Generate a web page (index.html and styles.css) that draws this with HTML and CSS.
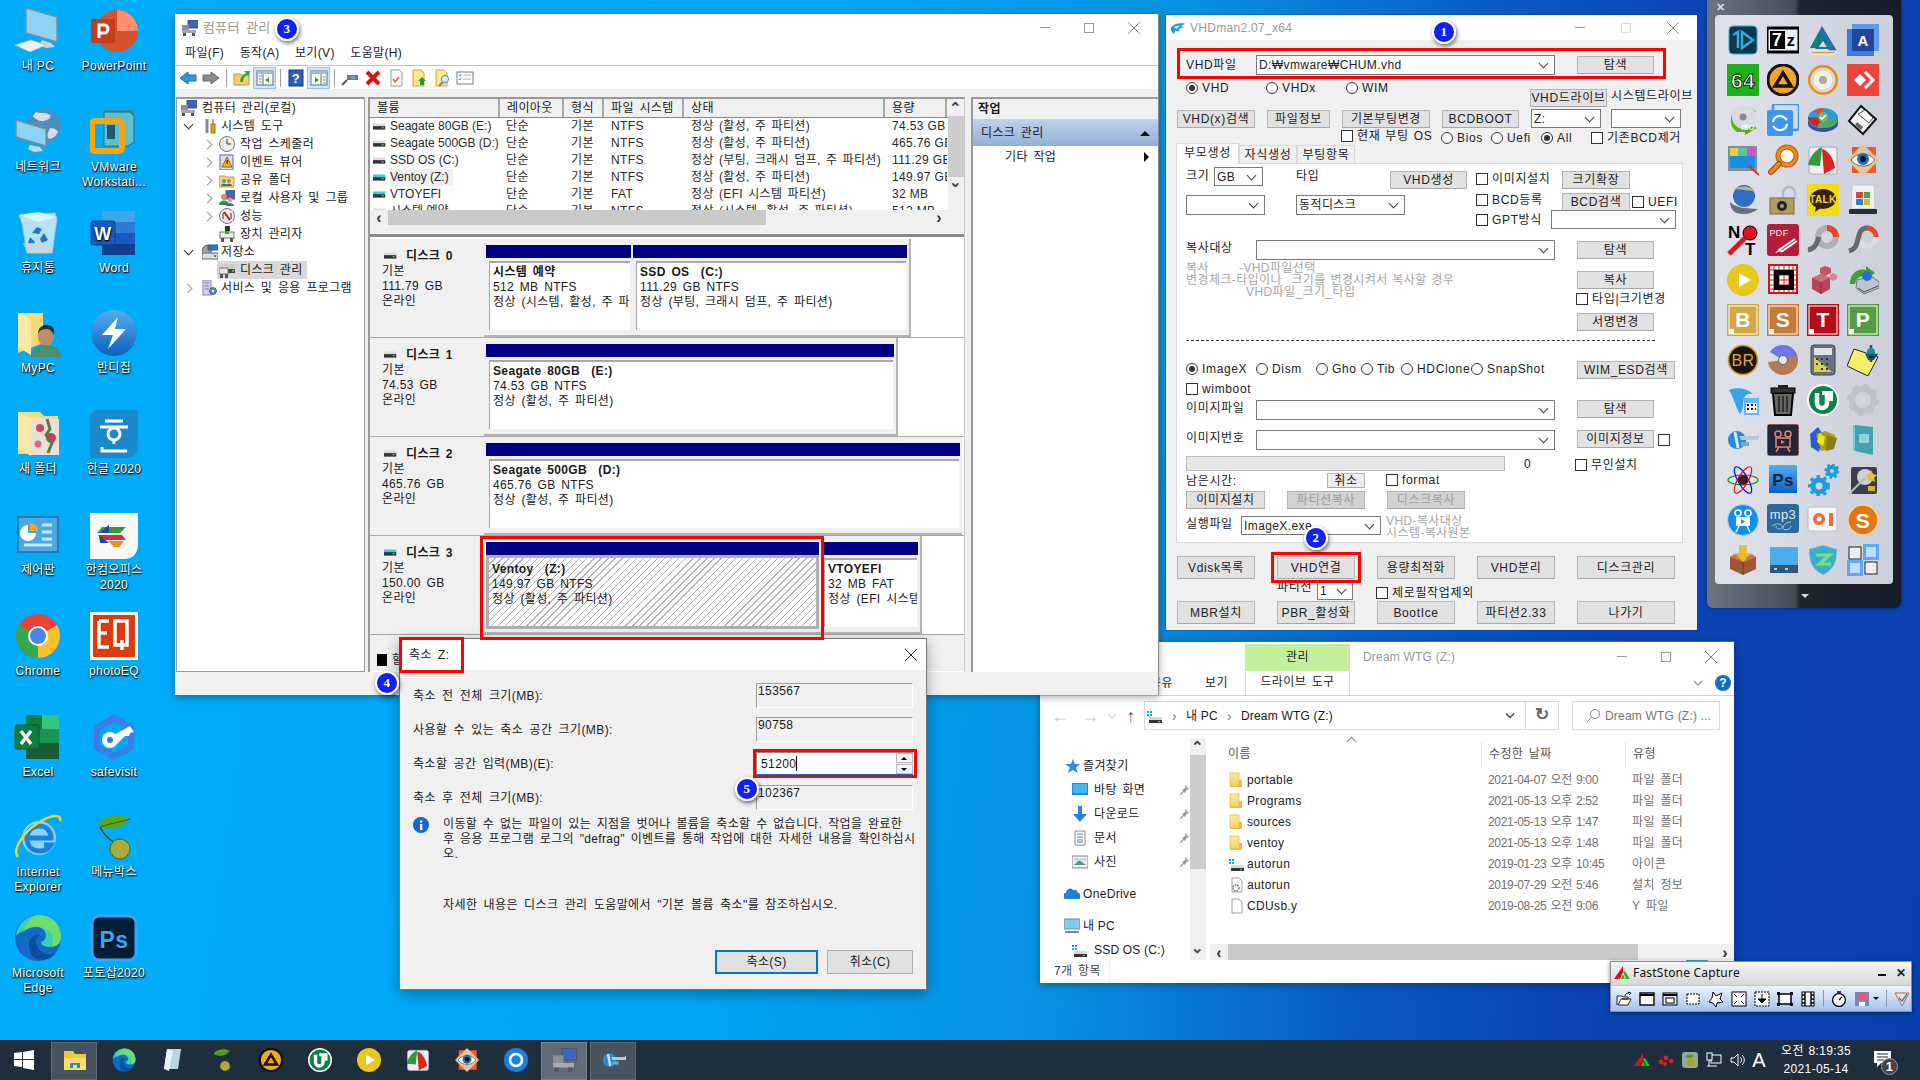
FILE: index.html
```html
<!DOCTYPE html>
<html lang="ko">
<head>
<meta charset="utf-8">
<title>VHDman</title>
<link rel="stylesheet" href="styles.css">
</head>
<body>
<svg class="sprite" xmlns="http://www.w3.org/2000/svg">
<defs>
<linearGradient id="gFolder" x1="0" y1="0" x2="0" y2="1"><stop offset="0" stop-color="#fde9a0"/><stop offset="1" stop-color="#f7cf63"/></linearGradient>
<linearGradient id="gBlue" x1="0" y1="0" x2="0" y2="1"><stop offset="0" stop-color="#55aef0"/><stop offset="1" stop-color="#0c5fc0"/></linearGradient>
<linearGradient id="gDrive" x1="0" y1="0" x2="0" y2="1"><stop offset="0" stop-color="#e6e6e6"/><stop offset="1" stop-color="#b5b5b5"/></linearGradient>

<symbol id="d-pc" viewBox="0 0 48 48"><path d="M12 1l31 9v25L12 26z" fill="#8dd3f6" stroke="#7f8d98" stroke-width="1.5"/><path d="M28 33l9 3 4 4-9 1-7-3z" fill="#cfd6da"/><path d="M1 38l16-5 15 5-16 7z" fill="#eef1f2" stroke="#b5bcc0" stroke-width=".7"/></symbol>
<symbol id="d-net" viewBox="0 0 48 48"><circle cx="30" cy="18" r="17" fill="#4b8fc0"/><path d="M22 4c6 2 10 0 14 3 2 3-3 5-6 6-4 1-9-2-11-5zM36 20c4 0 7 2 8 4-3 6-8 8-10 6-1-3 0-7 2-10z" fill="#d8dfe2"/><path d="M2 12l30 9v17L2 29z" fill="#8dd3f6" stroke="#7f8d98" stroke-width="1.5"/><path d="M16 37l10 2 3 4-9 1-6-3z" fill="#cfd6da"/></symbol>
<symbol id="d-bin" viewBox="0 0 48 48"><path d="M5 6l36-2 2 6-5 34H13L8 14z" fill="#b4e3f5" stroke="#9fc4d4"/><path d="M5 6l19-3 19 5-19 5z" fill="#dff3fb"/><path d="M18 24l5-6 5 2-3 5zM30 24l4 7-6 3-2-4zM16 28l5 5-1 2-6-1z" fill="#1d78c9"/><path d="M9 34h31l-2 10H13z" fill="#c8d4da" opacity=".7"/></symbol>
<symbol id="d-mypc" viewBox="0 0 48 48"><path d="M4 4l25 0v30L4 44V2z" fill="#f7d978"/><path d="M4 4l13 6v36L4 38z" fill="#fce9a9"/><ellipse cx="32" cy="28" rx="8" ry="9" fill="#b98d6e"/><path d="M24 25c0-7 5-9 9-9 5 0 8 3 7 10-2-5-5-6-8-6s-6 1-8 5z" fill="#2f2a26"/><path d="M17 48c0-8 7-12 15-12s15 4 16 12z" fill="#4e8d6c"/></symbol>
<symbol id="d-fold2" viewBox="0 0 48 48"><path d="M4 2h22l4 4h14v38H4z" fill="#f7d978"/><path d="M4 2l13 6v38L4 38z" fill="#fce9a9"/><path d="M17 7l28 2v36H17z" fill="#e8e2d2"/><circle cx="26" cy="18" r="4" fill="#d5476a"/><circle cx="37" cy="28" r="5" fill="#c83a60"/><circle cx="24" cy="34" r="3.5" fill="#d96a86"/><path d="M33 9l3 10-4 6 6 8-4 10" stroke="#5b7a47" stroke-width="3" fill="none"/></symbol>
<symbol id="d-hwp" viewBox="0 0 48 48"><path d="M0 10Q0 0 10 0h38v36q0 12-12 12H0z" fill="#1a8acb"/><path d="M15 11h18M10 17h28" stroke="#fff" stroke-width="3"/><circle cx="24" cy="24" r="6" fill="none" stroke="#fff" stroke-width="3"/><path d="M24 31v3M12 37v4h25" stroke="#fff" stroke-width="3" fill="none"/></symbol>
<symbol id="d-ctl" viewBox="0 0 48 48"><rect x="4" y="6" width="40" height="35" fill="#4aa8e4" stroke="#1f7cb8" stroke-width="2"/><path d="M14 14a8 8 0 1 0 8 8h-8z" fill="#fff"/><path d="M16 12a8 8 0 0 1 8 8h-8z" fill="#f0a52a"/><path d="M28 14h10M28 21h10M28 28h10M10 34h28" stroke="#c7e7f8" stroke-width="3"/></symbol>
<symbol id="d-han" viewBox="0 0 48 48"><path d="M0 2h48v30q0 16-14 16H0z" fill="#f8f8f8"/><path d="M12 16h24l-6 6H7z" fill="#2e9d3f"/><path d="M8 24h24l4 5H13z" fill="#d92b3c"/><path d="M18 30h16l-5 6H24z" fill="#ef8e21"/><path d="M9 22l10-8v8zM9 24l10 8h-9z" fill="#2844a8"/></symbol>
<symbol id="d-chrome" viewBox="0 0 48 48"><circle cx="24" cy="24" r="22" fill="#ea4335"/><path d="M24 24l19-11a22 22 0 0 1-19 33z" fill="#fbc02d"/><path d="M24 24L24 46A22 22 0 0 1 5 13z" fill="#34a853"/><circle cx="24" cy="24" r="10" fill="#fff"/><circle cx="24" cy="24" r="8" fill="#4a86e8"/></symbol>
<symbol id="d-eq" viewBox="0 0 48 48"><rect width="48" height="48" fill="#fff"/><rect x="3" y="3" width="42" height="42" fill="#dd3a0d"/><path d="M9 9h10M9 9v26h10M9 21h8M25 9h12v24H25zM32 28v10" stroke="#fff" stroke-width="3.5" fill="none"/></symbol>
<symbol id="d-xl" viewBox="0 0 48 48"><path d="M12 2h33v44H12z" fill="#107c41"/><path d="M28 2h17v14H28z" fill="#33c481"/><path d="M12 16h33v14H12z" fill="#21a366" opacity=".6"/><path d="M12 30h33v16H12z" fill="#185c37"/><rect x="1" y="12" width="24" height="24" rx="2" fill="#107c41" stroke="#0a5a2e"/><path d="M7 18l10 13M17 18L7 31" stroke="#fff" stroke-width="3.4"/></symbol>
<symbol id="d-safe" viewBox="0 0 48 48"><path d="M24 1l20 12v23L24 47 4 36V13z" fill="#3e7be6"/><path d="M24 9l14 8v15l-14 8-14-8V17z" fill="#00aaf7"/><circle cx="20" cy="27" r="8" fill="#fff"/><circle cx="20" cy="27" r="3" fill="#3e7be6"/><path d="M24 22l16-9 4 6-4 1-1 3-4 0-8 8z" fill="#fff"/></symbol>
<symbol id="d-ie" viewBox="0 0 48 48"><circle cx="25" cy="25" r="17" fill="#8cd5fa"/><path d="M13 25h24c0-8-5-12-12-12s-12 5-12 12zM13 25c0 8 5 13 13 13 6 0 9-2 11-6h-7" fill="none" stroke="#1b81de" stroke-width="5"/><path d="M4 44C-2 38 8 20 24 10 36 2 48 0 46 8" fill="none" stroke="#f5cf2c" stroke-width="2.5"/></symbol>
<symbol id="d-menu" viewBox="0 0 48 48"><path d="M8 10c8-8 22-10 32-4-6 8-18 12-30 8z" fill="#5aa51f"/><path d="M10 14c8-3 20-5 30-8" stroke="#2f6a10"/><path d="M10 14c4 8 8 12 14 15" stroke="#3a3a1a" fill="none" stroke-width="1.5"/><circle cx="30" cy="36" r="10" fill="#a8ad3a" stroke="#5a5f1c"/></symbol>
<symbol id="d-edge" viewBox="0 0 48 48"><circle cx="24" cy="24" r="23" fill="#0f6ac8"/><path d="M2 22C4 8 14 1 25 1c12 0 22 9 22 22 0 7-5 10-11 10-5 0-9-2-9-5 3-1 5-3 5-6 0-7-7-10-13-9C11 14 4 20 2 22z" fill="#3ad0b0"/><path d="M25 1c12 0 22 9 22 22 0 6-4 9-9 10 3-8 0-18-13-20-6-1-14 2-17 7C12 10 17 1 25 1z" fill="#7fe05c" opacity=".75"/><path d="M15 30c0-6 5-10 11-9-6 3-5 12 2 17 4 3 9 3 14 1-7 8-18 9-24 3-2-3-3-8-3-12z" fill="#0b4f9c"/></symbol>
<symbol id="d-ps" viewBox="0 0 48 48"><rect x="2" y="2" width="44" height="44" rx="7" fill="#001e36" stroke="#31a8ff" stroke-width="3"/><text x="24" y="34" text-anchor="middle" font-family="Liberation Sans" font-weight="700" font-size="23" fill="#31a8ff">Ps</text></symbol>
<symbol id="d-ppt" viewBox="0 0 48 48"><circle cx="27" cy="24" r="21" fill="#d35230"/><path d="M27 3a21 21 0 0 1 21 21H27z" fill="#ff8f6b"/><rect x="1" y="12" width="24" height="24" rx="2" fill="#c43e1c"/><path d="M9 31V18h5a4 4 0 0 1 0 8H9" stroke="#fff" stroke-width="3" fill="none"/></symbol>
<symbol id="d-word" viewBox="0 0 48 48"><path d="M12 2h33v44H12z" fill="#185abd"/><path d="M12 2h33v11H12z" fill="#41a5ee"/><path d="M12 13h33v11H12z" fill="#2b7cd3"/><path d="M12 35h33v11H12z" fill="#103f91"/><rect x="1" y="12" width="24" height="24" rx="2" fill="#185abd" stroke="#103f91"/><text x="13" y="31" text-anchor="middle" font-family="Liberation Sans" font-weight="700" font-size="18" fill="#fff">W</text></symbol>
<symbol id="d-vm" viewBox="0 0 48 48"><path d="M14 2h30v32H36V12H14z" fill="#2f8ca6"/><path d="M14 4h26l4 4v26l-6 4H14z" fill="#61c0cf" stroke="#1f6f86"/><rect x="2" y="13" width="30" height="30" rx="3" fill="none" stroke="#f5a612" stroke-width="6"/><rect x="17" y="17" width="8" height="14" fill="#23576a"/></symbol>
<symbol id="d-ban" viewBox="0 0 48 48"><circle cx="24" cy="24" r="23" fill="url(#gBlue)"/><path d="M28 8L12 26h11l-5 14 18-20H25z" fill="#fff"/></symbol>

<symbol id="l-1d" viewBox="0 0 32 32"><rect x="2" y="2" width="28" height="28" rx="4" fill="#0d3850" stroke="#3aa7d8"/><path d="M6 11l5-3v16" fill="none" stroke="#39a8dc" stroke-width="2.5"/><path d="M15 8l11 8-11 8z" fill="none" stroke="#39a8dc" stroke-width="2.5"/></symbol>
<symbol id="l-7z" viewBox="0 0 32 32"><rect y="4" width="32" height="24" fill="#eef1f8" stroke="#000" stroke-width="3"/><rect x="3" y="7" width="15" height="18" fill="#000"/><text x="10" y="22" text-anchor="middle" font-family="Liberation Sans" font-weight="700" font-size="18" fill="#fff">7</text><text x="24" y="22" text-anchor="middle" font-family="Liberation Sans" font-weight="700" font-size="16">z</text></symbol>
<symbol id="l-tri" viewBox="0 0 32 32"><path d="M15 2L3 24h8L16 12z" fill="#0f7e7e"/><path d="M15 2l15 25h-8L14 12z" fill="#2b6cb0"/><path d="M2 27h28l-3 3H5z" fill="#f39a2b" stroke="#fff"/><path d="M10 24h12l-6-9z" fill="none" stroke="#0f7e7e" stroke-width="2"/></symbol>
<symbol id="l-a" viewBox="0 0 32 32"><rect x="5" width="27" height="27" fill="#5f9ce8"/><rect y="5" width="27" height="27" fill="#3a7bdc"/><rect x="5" y="5" width="22" height="22" fill="#23469a"/><text x="16" y="22" text-anchor="middle" font-family="Liberation Sans" font-weight="700" font-size="15" fill="#fff">A</text></symbol>
<symbol id="l-64" viewBox="0 0 32 32"><rect width="32" height="32" fill="#1cb01c"/><text x="16" y="24" text-anchor="middle" font-family="Liberation Sans" font-weight="700" font-size="21" fill="#fff" stroke="#000" stroke-width=".8">64</text></symbol>
<symbol id="l-aimp" viewBox="0 0 32 32"><circle cx="16" cy="16" r="15" fill="#f2a623" stroke="#111" stroke-width="3"/><path d="M16 9l8 13H8z" fill="none" stroke="#111" stroke-width="3.4"/></symbol>
<symbol id="l-sun" viewBox="0 0 32 32"><circle cx="16" cy="16" r="15" fill="#f08a12"/><circle cx="16" cy="16" r="12" fill="#f5f0e8"/><circle cx="16" cy="16" r="11" fill="none" stroke="#d9d9d9" stroke-width="3"/><circle cx="16" cy="16" r="4" fill="#a9a9a9"/></symbol>
<symbol id="l-any" viewBox="0 0 32 32"><rect width="32" height="32" fill="#ef443b"/><path d="M7 16l6-6 6 6-6 6z" fill="#fff"/><path d="M18 8l8 8-8 8" fill="none" stroke="#fff" stroke-width="3"/></symbol>
<symbol id="l-iso" viewBox="0 0 32 32"><path d="M29 8A14 14 0 1 0 10 28h8v3l12-7-12-6v3h-5A9 9 0 1 1 26 9z" fill="#52b21a"/><circle cx="17" cy="13" r="12" fill="#d8dadf"/><circle cx="16" cy="13" r="3.5" fill="#888"/><text x="21" y="26" text-anchor="middle" font-family="Liberation Sans" font-weight="700" font-size="7" fill="#fff">ISO</text></symbol>
<symbol id="l-sync" viewBox="0 0 32 32"><rect x="6" width="26" height="26" rx="2" fill="none" stroke="#3d96ef" stroke-width="2.5"/><rect y="6" width="26" height="26" rx="2" fill="#3d96ef"/><path d="M6 18a7 7 0 0 1 12-4l2 2M20 20a7 7 0 0 1-12 4l-2-2" fill="none" stroke="#fff" stroke-width="2.2"/></symbol>
<symbol id="l-pie" viewBox="0 0 32 32"><ellipse cx="16" cy="14" rx="15" ry="10" fill="#2a9ad8"/><path d="M1 14v6c0 4 7 8 15 8s15-4 15-8v-6c0 6-7 10-15 10S1 20 1 14z" fill="#3a4fa8"/><path d="M16 14L1 13c0 5 4 8 9 10z" fill="#c62828"/><path d="M16 14l15 2c-1 5-8 8-15 8-2 0-4 0-6-1z" fill="#4eaa5a"/><path d="M16 14l-9-7c3-2 6-3 9-3z" fill="#e0483a"/><circle cx="16" cy="13" r="5" fill="#78b078"/><path d="M13 13l2 2 4-4" stroke="#fff" fill="none" stroke-width="1.5"/></symbol>
<symbol id="l-flop" viewBox="0 0 32 32"><path d="M14 2l15 13-13 15L2 17z" fill="#f2f2f2" stroke="#111" stroke-width="2"/><path d="M11 10l7-4 8 8-4 5z" fill="#fff" stroke="#555"/><path d="M10 18l6 5-2 3-6-5z" fill="#666"/></symbol>
<symbol id="l-pal" viewBox="0 0 32 32"><rect x="1" y="2" width="29" height="25" fill="#7e8fa0"/><rect x="3" y="4" width="25" height="20" fill="#1a8ede"/><path d="M3 4h25v8H3z" fill="#59c8a0"/><path d="M3 4h8v8H3z" fill="#e4d334"/><path d="M20 4h8v8h-8z" fill="#d94dc8"/><path d="M22 22l10 9" stroke="#c33" stroke-width="2"/></symbol>
<symbol id="l-mag" viewBox="0 0 32 32"><circle cx="20" cy="12" r="9" fill="#fff6e8" stroke="#b45e0c" stroke-width="5"/><circle cx="20" cy="12" r="9" fill="none" stroke="#f08a1c" stroke-width="3"/><path d="M12 20L4 28" stroke="#a3520c" stroke-width="6" stroke-linecap="round"/><path d="M12 20L4 28" stroke="#f08a1c" stroke-width="3.4" stroke-linecap="round"/></symbol>
<symbol id="l-fan" viewBox="0 0 32 32"><rect x="2" y="3" width="28" height="27" rx="3" fill="#eeeef2" stroke="#a8abb6"/><path d="M15 3c-8 4-12 10-14 18l12 1z" fill="#2e9a3c"/><path d="M15 5c6 1 12 10 13 19L17 30z" fill="#d62518"/></symbol>
<symbol id="l-eye" viewBox="0 0 32 32"><rect x="5" y="3" width="24" height="26" fill="#ef5a2c"/><path d="M16 0l16 16-16 16L0 16z" fill="#e2c6a0"/><path d="M4 16c6-8 18-8 24 0-6 8-18 8-24 0z" fill="#fff" stroke="#7c5c2a"/><circle cx="16" cy="15" r="6" fill="#1a6fc9"/><circle cx="16" cy="15" r="3" fill="#111"/></symbol>
<symbol id="l-glob" viewBox="0 0 32 32"><circle cx="17" cy="12" r="11" fill="#2f6fc2"/><path d="M8 5c6-4 16-3 20 3-5-2-12-2-20-3z" fill="#c9ad7d"/><path d="M3 18c6 6 14 6 28 7-6 5-14 6-21 4-4-1-7-6-7-11z" fill="#6d6f75"/></symbol>
<symbol id="l-lock" viewBox="0 0 32 32"><path d="M16 16V9a6 6 0 0 1 12 0v6" fill="none" stroke="#b8bcc4" stroke-width="2.5"/><rect x="3" y="14" width="24" height="16" fill="#b09c62" stroke="#7c6a3a"/><circle cx="15" cy="22" r="5" fill="#222"/><circle cx="15" cy="22" r="2" fill="#b09c62"/></symbol>
<symbol id="l-talk" viewBox="0 0 32 32"><rect width="32" height="32" fill="#f0dc1a"/><ellipse cx="16" cy="15" rx="13" ry="10" fill="#3a1f1f"/><path d="M9 22l-1 6 6-4z" fill="#3a1f1f"/><text x="16" y="19" text-anchor="middle" font-family="Liberation Sans" font-weight="700" font-size="10" fill="#f0dc1a">TALK</text></symbol>
<symbol id="l-win" viewBox="0 0 32 32"><path d="M5 1h22l1 24H4z" fill="#f0f2f4" stroke="#c4c8cc"/><path d="M9 8h7v6H9z" fill="#c84a3a"/><path d="M17 8h6v6h-6z" fill="#5da03a"/><path d="M9 15h7v6H9z" fill="#3a7ac0"/><path d="M17 15h6v6h-6z" fill="#e4b230"/><rect x="2" y="25" width="28" height="5" rx="1" fill="#1f2f44"/></symbol>
<symbol id="l-nt" viewBox="0 0 32 32"><text x="1" y="14" font-family="Liberation Sans" font-weight="700" font-size="17">N</text><text x="18" y="31" font-family="Liberation Sans" font-weight="700" font-size="17">T</text><circle cx="23" cy="9" r="7" fill="#e01224" stroke="#000"/><path d="M18 14L2 30" stroke="#e01224" stroke-width="5"/></symbol>
<symbol id="l-pdf" viewBox="0 0 32 32"><rect width="32" height="32" rx="3" fill="#b51d3a"/><text x="12" y="12" text-anchor="middle" font-family="Liberation Sans" font-weight="400" font-size="9" fill="#fff">PDF</text><path d="M12 26l16-11M14 28l16-11" stroke="#fff" stroke-width="2"/><path d="M8 29l5-5 2 3z" fill="#fff"/></symbol>
<symbol id="l-ring" viewBox="0 0 32 32"><circle cx="20" cy="13" r="9" fill="none" stroke="#aeb0b4" stroke-width="6"/><path d="M20 4a9 9 0 0 1 9 9" fill="none" stroke="#e8452a" stroke-width="6"/><path d="M12 13c-2 6-4 12-11 13" fill="none" stroke="#666a70" stroke-width="5"/></symbol>
<symbol id="l-sarc" viewBox="0 0 32 32"><circle cx="20" cy="13" r="9" fill="none" stroke="#dcdde2" stroke-width="5"/><path d="M20 4a9 9 0 0 1 9 9" fill="none" stroke="#e8452a" stroke-width="5"/><path d="M20 4c-8 0-8 8-10 15-1 4-4 7-8 8" fill="none" stroke="#666a70" stroke-width="5"/></symbol>
<symbol id="l-play" viewBox="0 0 32 32"><circle cx="16" cy="16" r="16" fill="#e6c81e"/><path d="M12 9l12 7-12 7z" fill="#fff"/></symbol>
<symbol id="l-grid" viewBox="0 0 32 32"><rect x="2" y="1" width="28" height="28" fill="#fff" stroke="#e01010" stroke-width="2"/><path d="M7 1v28M12 1v28M17 1v28M22 1v28M26 1v28M2 6h28M2 11h28M2 16h28M2 21h28M2 25h28" stroke="#e01010"/><path d="M7 6h15v5H12v10h15v5H7z" fill="#000"/><path d="M22 6h5v19h-5z" fill="#000"/></symbol>
<symbol id="l-cube" viewBox="0 0 32 32"><path d="M5 14l9-4 9 4v11l-9 5-9-5z" fill="#b64356"/><path d="M5 14l9 4 9-4-9-4z" fill="#d36b7d"/><path d="M14 18v12" stroke="#8c2a3c"/><path d="M18 2l6 2v5l-6 3-5-3V4z" fill="#c45568"/><path d="M26 9l4 2v4l-4 2-3-2v-4z" fill="#d98797"/></symbol>
<symbol id="l-driv" viewBox="0 0 32 32"><path d="M3 20c0-10 7-16 16-14V2l9 7-9 7v-4c-6-1-10 3-11 8z" fill="#3aa52e"/><path d="M10 16l14-4 8 6v6l-15 6-8-6z" fill="#bcc4cc" stroke="#777"/><circle cx="20" cy="12" r="5" fill="#2a6cd0"/><path d="M11 24l6 4 14-6" stroke="#447" fill="none"/></symbol>
<symbol id="l-b" viewBox="0 0 32 32"><rect width="32" height="32" fill="#d2a845"/><rect x="2" y="2" width="28" height="28" fill="none" stroke="#fff"/><rect x="2" y="25" width="5" height="5" fill="#fff"/><text x="16" y="23" text-anchor="middle" font-family="Liberation Sans" font-weight="700" font-size="21" fill="#fff">B</text></symbol>
<symbol id="l-s" viewBox="0 0 32 32"><rect width="32" height="32" fill="#c57a36"/><rect x="2" y="2" width="28" height="28" fill="none" stroke="#fff"/><rect x="2" y="25" width="5" height="5" fill="#fff"/><text x="16" y="23" text-anchor="middle" font-family="Liberation Sans" font-weight="700" font-size="21" fill="#fff">S</text></symbol>
<symbol id="l-t" viewBox="0 0 32 32"><rect width="32" height="32" fill="#b30d1c"/><rect x="2" y="2" width="28" height="28" fill="none" stroke="#fff"/><rect x="2" y="25" width="5" height="5" fill="#fff"/><text x="16" y="23" text-anchor="middle" font-family="Liberation Sans" font-weight="700" font-size="21" fill="#fff">T</text></symbol>
<symbol id="l-p" viewBox="0 0 32 32"><rect width="32" height="32" fill="#559c42"/><rect x="2" y="2" width="28" height="28" fill="none" stroke="#fff"/><rect x="2" y="25" width="5" height="5" fill="#fff"/><text x="16" y="23" text-anchor="middle" font-family="Liberation Sans" font-weight="700" font-size="21" fill="#fff">P</text></symbol>
<symbol id="l-br" viewBox="0 0 32 32"><circle cx="16" cy="16" r="14.5" fill="#171313" stroke="#d79a1f" stroke-width="1.6"/><text x="16" y="22" text-anchor="middle" font-family="Liberation Sans" font-size="16" fill="#e0a62a">BR</text></symbol>
<symbol id="l-cd" viewBox="0 0 32 32"><circle cx="16" cy="16" r="15" fill="#b47c56"/><path d="M16 1a15 15 0 0 1 14 10L16 16 3 8a15 15 0 0 1 13-7z" fill="#6a78ea"/><path d="M3 8l13 8L1 18a15 15 0 0 1 2-10z" fill="#dcdde8"/><circle cx="16" cy="16" r="4.5" fill="#e8e8ee" stroke="#666"/></symbol>
<symbol id="l-calc" viewBox="0 0 32 32"><rect x="4" y="1" width="24" height="30" rx="3" fill="#6c7280" stroke="#40454e"/><rect x="7" y="4" width="18" height="7" fill="#dde3ea"/><path d="M7 13l0 15h18z" fill="#d6d24a"/><path d="M9 14h2v2H9zM14 14h2v2h-2zM19 14h2v2h-2zM9 19h2v2H9zM14 19h2v2h-2zM19 19h2v2h-2zM14 24h2v2h-2zM19 24h2v2h-2z" fill="#333"/></symbol>
<symbol id="l-note" viewBox="0 0 32 32"><path d="M7 5l24 8-10 19L0 22z" fill="#f4f06c" stroke="#222"/><circle cx="24" cy="8" r="4" fill="#1a8c9a"/><path d="M24 4v-3M20 11h9l-3 4h-4zM24 15v3" stroke="#0f5f6c" stroke-width="2.5"/></symbol>
<symbol id="l-dolp" viewBox="0 0 32 32"><path d="M2 6c8-3 18-2 24 4-4-1-7 0-9 4-2 6 0 12-4 16-4-6-6-16-11-24z" fill="#3aa3e8"/><rect x="17" y="14" width="15" height="17" fill="#62b9f5"/><path d="M19 19h11v10H19z" fill="#fff"/><path d="M20 20h2v2h-2zM24 20h2v2h-2zM28 20h1v2h-1zM20 24h2v2h-2zM24 24h2v2h-2zM28 24h1v2h-1z" fill="#00f"/></symbol>
<symbol id="l-bin" viewBox="0 0 32 32"><path d="M6 9h20l-2 22H8z" fill="#666" stroke="#000" stroke-width="2"/><rect x="4" y="4" width="24" height="5" fill="#333" stroke="#000"/><rect x="11" y="1" width="10" height="4" fill="#222"/><path d="M12 12v16M16 12v16M20 12v16" stroke="#222" stroke-width="1.5"/></symbol>
<symbol id="l-ut" viewBox="0 0 32 32"><circle cx="16" cy="16" r="15" fill="#0a8348" stroke="#fff" stroke-width="2"/><path d="M10 9v10a5 5 0 0 0 10 0V9" fill="none" stroke="#fff" stroke-width="4.5"/><path d="M15 9h9v8" fill="none" stroke="#fff" stroke-width="4"/></symbol>
<symbol id="l-gear" viewBox="0 0 32 32"><circle cx="16" cy="16" r="11" fill="none" stroke="#bfc2c9" stroke-width="6"/><circle cx="16" cy="16" r="14" fill="none" stroke="#bfc2c9" stroke-width="4" stroke-dasharray="5 6"/><circle cx="16" cy="16" r="3" fill="#d7d9de"/></symbol>
<symbol id="l-torch" viewBox="0 0 32 32"><circle cx="10" cy="16" r="9" fill="#2a89d0"/><path d="M12 12h18l2-2v6H14z" fill="#b8c8d8"/><path d="M14 18h8v4h-8z" fill="#78a8d0"/><path d="M8 8l3 16" stroke="#cfe6f6" stroke-width="3"/></symbol>
<symbol id="l-vid" viewBox="0 0 32 32"><rect width="32" height="32" rx="3" fill="#1e2637" stroke="#e8806f"/><circle cx="11" cy="10" r="3" fill="none" stroke="#e8806f" stroke-width="1.5"/><circle cx="21" cy="10" r="3" fill="none" stroke="#e8806f" stroke-width="1.5"/><rect x="9" y="14" width="14" height="9" fill="none" stroke="#e8806f" stroke-width="1.5"/><path d="M14 16l4 2-4 2z" fill="#e8806f"/><path d="M12 23l-3 5M20 23l3 5" stroke="#e8806f" stroke-width="1.5"/></symbol>
<symbol id="l-cub2" viewBox="0 0 32 32"><path d="M3 10l8-7 6 9-5 16-8-5z" fill="#2a60c8"/><path d="M9 10l9-3 10 4-2 14-12 2z" fill="#a8a018"/><path d="M12 9l6 4-2 9-6-4z" fill="#f8e21c"/><path d="M20 11l10 3-3 11-8 2z" fill="#888014"/></symbol>
<symbol id="l-book" viewBox="0 0 32 32"><path d="M8 1l18 2v28L8 27z" fill="#3ea4b0"/><path d="M6 1h2v26l-2-1z" fill="#7fc8d0"/><rect x="12" y="10" width="10" height="9" fill="#8fd2da"/></symbol>
<symbol id="l-atom" viewBox="0 0 32 32"><ellipse cx="16" cy="16" rx="15" ry="5" fill="none" stroke="#0a8f0a" stroke-width="1.2"/><ellipse cx="16" cy="16" rx="15" ry="5" fill="none" stroke="#00f" stroke-width="1.2" transform="rotate(60 16 16)"/><ellipse cx="16" cy="16" rx="15" ry="5" fill="none" stroke="#e01010" stroke-width="1.2" transform="rotate(-60 16 16)"/><circle cx="16" cy="16" r="5" fill="#611"/><circle cx="14" cy="15" r="2" fill="#223"/><circle cx="18" cy="18" r="2" fill="#223"/></symbol>
<symbol id="l-ps" viewBox="0 0 32 32"><rect x="2" y="1" width="28" height="28" fill="url(#gBlue)"/><text x="16" y="22" text-anchor="middle" font-family="Liberation Sans" font-weight="700" font-size="17" fill="#0f2336">Ps</text></symbol>
<symbol id="l-gears" viewBox="0 0 32 32"><circle cx="12" cy="22" r="6" fill="none" stroke="#1f9be0" stroke-width="5"/><circle cx="12" cy="22" r="9.5" fill="none" stroke="#1f9be0" stroke-width="3" stroke-dasharray="3.5 3.5"/><circle cx="25" cy="7" r="4" fill="none" stroke="#1f9be0" stroke-width="4"/><circle cx="25" cy="7" r="6.5" fill="none" stroke="#1f9be0" stroke-width="2.4" stroke-dasharray="2.5 2.5"/></symbol>
<symbol id="l-wiz" viewBox="0 0 32 32"><rect x="4" y="3" width="26" height="27" rx="2" fill="#39404a"/><circle cx="18" cy="13" r="8" fill="#ccd0d8"/><path d="M2 30L18 14" stroke="#b8bcc0" stroke-width="2"/><path d="M24 6l2 4 4 1-3 3 1 4-4-2-4 2 1-4-3-3 4-1z" fill="#f0c02c"/><rect x="21" y="22" width="7" height="5" fill="#d0b040"/></symbol>
<symbol id="l-cam" viewBox="0 0 32 32"><circle cx="16" cy="16" r="15.5" fill="#0c90ef" stroke="#c8ccd0"/><circle cx="11" cy="9" r="3" fill="none" stroke="#fff" stroke-width="1.6"/><circle cx="21" cy="9" r="3" fill="none" stroke="#fff" stroke-width="1.6"/><rect x="9" y="13" width="14" height="9" fill="#fff"/><path d="M14 15l4 2.5-4 2.5z" fill="#0c90ef"/><path d="M12 22l-3 6M20 22l3 6" stroke="#fff" stroke-width="1.6"/></symbol>
<symbol id="l-mp3" viewBox="0 0 32 32"><rect width="32" height="29" rx="3" fill="#2c6a9e"/><text x="16" y="15" text-anchor="middle" font-family="Liberation Sans" font-size="13" fill="#dfe9f2">mp3</text><path d="M5 22c4-3 8-3 10 0s-6 5-6 0M24 18c-4 0-8 3-8 6s8 2 8-2" stroke="#a8c6dc" fill="none"/></symbol>
<symbol id="l-oi" viewBox="0 0 32 32"><rect x="1" y="3" width="29" height="24" rx="2" fill="#f5f5f5" stroke="#bcbfc6"/><circle cx="12" cy="15" r="6" fill="#f26a3a"/><circle cx="12" cy="15" r="2.5" fill="#fff"/><rect x="22" y="9" width="4" height="13" fill="#f26a3a"/></symbol>
<symbol id="l-so" viewBox="0 0 32 32"><circle cx="16" cy="16" r="15" fill="#e2780f" stroke="#f6d6a8" stroke-width="1.5"/><text x="16" y="24" text-anchor="middle" font-family="Liberation Sans" font-weight="700" font-size="21" fill="#fff">S</text></symbol>
<symbol id="l-box" viewBox="0 0 32 32"><path d="M3 13l13-5 13 5v12l-13 6-13-6z" fill="#a35636"/><path d="M3 13l13 5 13-5-4-3-9 3-9-3z" fill="#c67a50"/><path d="M16 18v13" stroke="#6e3620"/><path d="M12 1h8v8h4l-8 9-8-9h4z" fill="#e8bd2c"/></symbol>
<symbol id="l-bar" viewBox="0 0 32 32"><rect x="3" y="3" width="28" height="26" rx="1" fill="#4aacec"/><rect x="3" y="21" width="28" height="8" fill="#355678"/><rect x="7" y="24" width="3" height="2" fill="#bcd"/><rect x="18" y="24" width="3" height="2" fill="#bcd"/></symbol>
<symbol id="l-shld" viewBox="0 0 32 32"><path d="M16 1l14 4c0 12-2 20-14 26C4 25 2 17 2 5z" fill="#3ab0c8" stroke="#c0c4cc"/><path d="M9 11h14l-11 9h12" fill="none" stroke="#78e080" stroke-width="3"/></symbol>
<symbol id="l-four" viewBox="0 0 32 32"><rect x="2" y="3" width="12" height="12" fill="#eee" stroke="#222"/><rect x="16" y="0" width="16" height="16" fill="#5da8f5"/><rect x="19" y="3" width="10" height="10" fill="#c0dcfa"/><rect y="16" width="16" height="16" fill="#5da8f5"/><rect x="3" y="19" width="10" height="10" fill="#c0dcfa"/><rect x="18" y="18" width="12" height="12" fill="#eee" stroke="#222"/></symbol>

<symbol id="s-comp" viewBox="0 0 16 16"><rect x="6" y="0" width="10" height="8" fill="#3d64c0" stroke="#555"/><rect x="0" y="5" width="7" height="5" fill="#8b929c"/><rect x="0" y="10" width="14" height="3" fill="#a4a9b2"/><rect x="1" y="13" width="3" height="3" fill="#555"/><rect x="10" y="13" width="3" height="3" fill="#555"/></symbol>
<symbol id="s-tool" viewBox="0 0 16 16"><path d="M5 1v14" stroke="#888" stroke-width="3"/><path d="M11 1v5" stroke="#aaa" stroke-width="2"/><rect x="9" y="6" width="4" height="9" fill="#e0a020" stroke="#a07010"/></symbol>
<symbol id="s-clock" viewBox="0 0 16 16"><circle cx="8" cy="8" r="7.5" fill="#eee" stroke="#777"/><path d="M8 3v5h4" stroke="#333" fill="none"/></symbol>
<symbol id="s-ev" viewBox="0 0 16 16"><rect x="1" y="1" width="13" height="15" fill="#dde" stroke="#56709a"/><path d="M8 3l5 10H3z" fill="#f0b020" stroke="#a06010"/><rect x="7.4" y="6" width="1.5" height="4" fill="#c01010"/></symbol>
<symbol id="s-shr" viewBox="0 0 16 16"><path d="M0 4h6l1 1h8v10H0z" fill="#f3d77e" stroke="#b89a42"/><circle cx="5" cy="9" r="2" fill="#4a7"/><circle cx="10" cy="9" r="2" fill="#a86"/><path d="M2 14c0-3 6-3 6 0zM7 14c0-3 6-3 6 0z" fill="#369"/></symbol>
<symbol id="s-usr" viewBox="0 0 16 16"><rect x="7" y="0" width="9" height="9" fill="#3d64c0" stroke="#666"/><circle cx="5" cy="7" r="3" fill="#c89460"/><path d="M0 15c0-6 10-6 10 0z" fill="#3a8a58"/><circle cx="11" cy="10" r="2.4" fill="#d8a878"/><path d="M7 16c0-4 8-4 8 0z" fill="#4a68b8"/></symbol>
<symbol id="s-perf" viewBox="0 0 16 16"><circle cx="8" cy="8" r="7.5" fill="#eee" stroke="#777" stroke-width="1"/><path d="M5 4l6 8" stroke="#d01010" stroke-width="2"/><path d="M4 11V5M12 5v6" stroke="#333"/></symbol>
<symbol id="s-dev" viewBox="0 0 16 16"><rect x="6" y="0" width="5" height="5" fill="#333"/><rect x="1" y="6" width="14" height="6" fill="#eee" stroke="#777"/><rect x="2" y="12" width="3" height="4" fill="#555"/><rect x="11" y="12" width="3" height="4" fill="#555"/><rect x="6" y="5" width="4" height="3" fill="#3a3"/></symbol>
<symbol id="s-stg" viewBox="0 0 16 16"><circle cx="5" cy="6" r="4.5" fill="#9ea9b2" stroke="#555"/><rect x="0" y="9" width="16" height="6" fill="#dde" stroke="#666"/><rect x="6" y="1" width="10" height="5" fill="#2a7ac8" stroke="#456"/><rect x="12" y="11" width="2" height="2" fill="#3a3"/></symbol>
<symbol id="s-dmg" viewBox="0 0 16 16"><rect x="2" y="2" width="14" height="5" fill="#ccc"/><rect x="2" y="7" width="14" height="4" fill="#444"/><rect x="0" y="6" width="9" height="6" fill="#e8e8e8" stroke="#777"/><rect x="1" y="12" width="3" height="4" fill="#555"/><rect x="6" y="12" width="3" height="4" fill="#555"/><rect x="13" y="8" width="2" height="2" fill="#4c4"/></symbol>
<symbol id="s-svc" viewBox="0 0 16 16"><rect x="1" y="0" width="8" height="15" fill="#dce" stroke="#789"/><path d="M3 3h4M3 6h4M3 9h4" stroke="#68a"/><circle cx="11" cy="11" r="3.4" fill="#5e9ad0" stroke="#357"/><circle cx="11" cy="11" r="1" fill="#fff"/></symbol>
<symbol id="s-hd" viewBox="0 0 16 8"><rect y="0" width="14" height="3" fill="#dcdcdc"/><rect y="3" width="14" height="4" fill="#333"/><rect x="10" y="4" width="2" height="1.5" fill="#6c6"/></symbol>
<symbol id="s-hdv" viewBox="0 0 16 8"><rect y="0" width="14" height="3" fill="#19d8e8"/><rect y="3" width="14" height="4" fill="#333"/><rect x="10" y="4" width="2" height="1.5" fill="#6c6"/></symbol>
<symbol id="s-folder" viewBox="0 0 16 16"><path d="M1 1h9v13H1z" fill="url(#gFolder)" stroke="#e4bb52" stroke-width=".8"/><path d="M10 8l3 0v7H1v-1h9z" fill="#edbe3c"/></symbol>
<symbol id="s-drive" viewBox="0 0 16 16"><rect x="2" y="9" width="13" height="3" fill="#d8d8d8"/><path d="M2 12h13v3H2z" fill="#333"/><rect x="11" y="13" width="2" height="1" fill="#5d5"/><path d="M0 3h2v2H0zM3 3h2v2H3zM0 6h2v2H0zM3 6h2v2H3z" fill="#1aa0e8"/></symbol>
<symbol id="s-inf" viewBox="0 0 16 16"><path d="M3 1h7l3 3v11H3z" fill="#fdfdfd" stroke="#888" stroke-width=".8"/><circle cx="7" cy="11" r="3" fill="none" stroke="#777" stroke-width="1.5" stroke-dasharray="1.5 1"/></symbol>
<symbol id="s-blank" viewBox="0 0 16 16"><path d="M3 1h7l3 3v11H3z" fill="#fdfdfd" stroke="#888" stroke-width=".8"/></symbol>
<symbol id="s-pin" viewBox="0 0 12 12"><path d="M7 1l4 4-2 1-2 3-1-1-3 3-1-1 3-3-1-1 3-2z" fill="#9aa3ad"/></symbol>
<symbol id="s-chev" viewBox="0 0 10 6"><path d="M1 1l4 4 4-4" fill="none" stroke="currentColor" stroke-width="1.4"/></symbol>
</defs>
</svg>

<main class="desktop">
  <section class="desk-icons">
    <div class="di"><svg class="i48"><use href="#d-pc"/></svg><span>내 PC</span></div>
    <div class="di"><svg class="i48"><use href="#d-net"/></svg><span>네트워크</span></div>
    <div class="di"><svg class="i48"><use href="#d-bin"/></svg><span>휴지통</span></div>
    <div class="di"><svg class="i48"><use href="#d-mypc"/></svg><span>MyPC</span></div>
    <div class="di"><svg class="i48"><use href="#d-fold2"/></svg><span>새 폴더</span></div>
    <div class="di"><svg class="i48"><use href="#d-ctl"/></svg><span>제어판</span></div>
    <div class="di"><svg class="i48"><use href="#d-chrome"/></svg><span>Chrome</span></div>
    <div class="di"><svg class="i48"><use href="#d-xl"/></svg><span>Excel</span></div>
    <div class="di"><svg class="i48"><use href="#d-ie"/></svg><span>Internet<br>Explorer</span></div>
    <div class="di"><svg class="i48"><use href="#d-edge"/></svg><span>Microsoft<br>Edge</span></div>
    <div class="di"><svg class="i48"><use href="#d-ppt"/></svg><span>PowerPoint</span></div>
    <div class="di"><svg class="i48"><use href="#d-vm"/></svg><span>VMware<br>Workstati...</span></div>
    <div class="di"><svg class="i48"><use href="#d-word"/></svg><span>Word</span></div>
    <div class="di"><svg class="i48"><use href="#d-ban"/></svg><span>반디집</span></div>
    <div class="di"><svg class="i48"><use href="#d-hwp"/></svg><span>한글 2020</span></div>
    <div class="di"><svg class="i48"><use href="#d-han"/></svg><span>한컴오피스<br>2020</span></div>
    <div class="di"><svg class="i48"><use href="#d-eq"/></svg><span>photoEQ</span></div>
    <div class="di"><svg class="i48"><use href="#d-safe"/></svg><span>safevisit</span></div>
    <div class="di"><svg class="i48"><use href="#d-menu"/></svg><span>메뉴박스</span></div>
    <div class="di"><svg class="i48"><use href="#d-ps"/></svg><span>포토샵2020</span></div>
  </section>

  <!-- Explorer -->
  <section class="win ex">
    <header class="ex-title">
      <div class="ex-green">관리</div>
      <div class="ex-name lat">Dream WTG (Z:)</div>
      <div class="caps caps-ex"><i class="cap-min"></i><i class="cap-max"></i><i class="cap-x"></i></div>
    </header>
    <nav class="ex-ribbon">
      <span class="rb-share">공유</span><span class="rb-view">보기</span><span class="rb-tool">드라이브 도구</span>
      <svg class="rb-chev"><use href="#s-chev"/></svg><span class="rb-help">?</span>
    </nav>
    <div class="ex-addr">
      <span class="ar ar-back">←</span><span class="ar ar-fwd">→</span><svg class="ar-dd"><use href="#s-chev"/></svg><span class="ar ar-up">↑</span>
      <div class="addr-box">
        <svg class="i16"><use href="#s-drive"/></svg><span class="crumb-gt">›</span><span class="crumb1 lat">내 PC</span><span class="crumb-gt">›</span><span class="crumb2 lat">Dream WTG (Z:)</span>
        <svg class="addr-chev"><use href="#s-chev"/></svg><span class="addr-ref">↻</span>
      </div>
      <div class="search"><svg class="i16" viewBox="0 0 16 16"><circle cx="10" cy="6" r="4.5" fill="none" stroke="#888"/><path d="M7 9l-5 5" stroke="#888"/></svg><span class="lat">Dream WTG (Z:) ...</span></div>
    </div>
    <div class="ex-body">
      <aside class="ex-nav">
        <div class="nv nv-top"><svg class="i16" viewBox="0 0 16 16"><path d="M9 1l1.8 5H16l-4 3.4 1.6 5.6L9 12l-5 3 1.8-5.6L1 6h6z" fill="#2f8ee0"/></svg><span>즐겨찾기</span></div>
        <div class="nv nv-i"><svg class="i16" viewBox="0 0 16 16"><rect y="1" width="16" height="12" fill="#1a8ee0"/><rect x="1" y="2" width="14" height="9" fill="#4bb4f2"/></svg><span class="nv-t">바탕 화면</span><svg class="pin"><use href="#s-pin"/></svg></div>
        <div class="nv nv-i"><svg class="i16" viewBox="0 0 16 16"><path d="M6 0h4v8h5l-7 8-7-8h5z" fill="#2a86dc"/></svg><span class="nv-t">다운로드</span><svg class="pin"><use href="#s-pin"/></svg></div>
        <div class="nv nv-i"><svg class="i16" viewBox="0 0 16 16"><path d="M3 1h10v14H3z" fill="#fff" stroke="#889"/><path d="M5 4h6M5 7h6M5 10h6M5 12h6" stroke="#5a8ab8"/></svg><span class="nv-t">문서</span><svg class="pin"><use href="#s-pin"/></svg></div>
        <div class="nv nv-i"><svg class="i16" viewBox="0 0 16 16"><rect y="2" width="16" height="12" fill="#eee" stroke="#888"/><path d="M2 11l5-5 7 5z" fill="#5a9a7a"/><rect x="2" y="4" width="12" height="3" fill="#bfe0f2"/></svg><span class="nv-t">사진</span><svg class="pin"><use href="#s-pin"/></svg></div>
        <div class="nv nv-gap"><svg class="i16" viewBox="0 0 16 16"><path d="M2 13a3 3 0 0 1 0-6 4 4 0 0 1 7-3 3.5 3.5 0 0 1 5 3 3 3 0 0 1 0 6z" fill="#1a82d8"/></svg><span>OneDrive</span></div>
        <div class="nv nv-gap"><svg class="i16" viewBox="0 0 16 16"><rect y="1" width="16" height="10" fill="#7cccf5" stroke="#888"/><path d="M1 14h14" stroke="#888" stroke-width="2"/></svg><span class="lat">내 PC</span></div>
        <div class="nv nv-i"><svg class="i16"><use href="#s-drive"/></svg><span class="nv-t lat">SSD OS (C:)</span></div>
      </aside>
      <div class="vs vs-ex"><span class="vs-a">⌃</span><div class="vs-thumb"></div><span class="vs-a vs-b">⌄</span></div>
      <div class="ex-files">
        <div class="f-head"><span class="fh1">이름</span><i class="sort"></i><span class="fh2">수정한 날짜</span><span class="fh3">유형</span></div>
        <div class="f-row"><span class="fn"><svg class="i16"><use href="#s-folder"/></svg>portable</span><span class="fd">2021-04-07 오전 9:00</span><span class="ft">파일 폴더</span></div>
        <div class="f-row"><span class="fn"><svg class="i16"><use href="#s-folder"/></svg>Programs</span><span class="fd">2021-05-13 오후 2:52</span><span class="ft">파일 폴더</span></div>
        <div class="f-row"><span class="fn"><svg class="i16"><use href="#s-folder"/></svg>sources</span><span class="fd">2021-05-13 오후 1:47</span><span class="ft">파일 폴더</span></div>
        <div class="f-row"><span class="fn"><svg class="i16"><use href="#s-folder"/></svg>ventoy</span><span class="fd">2021-05-13 오후 1:48</span><span class="ft">파일 폴더</span></div>
        <div class="f-row"><span class="fn"><svg class="i16"><use href="#s-drive"/></svg>autorun</span><span class="fd">2019-01-23 오후 10:45</span><span class="ft">아이콘</span></div>
        <div class="f-row"><span class="fn"><svg class="i16"><use href="#s-inf"/></svg>autorun</span><span class="fd">2019-07-29 오전 5:46</span><span class="ft">설치 정보</span></div>
        <div class="f-row"><span class="fn"><svg class="i16"><use href="#s-blank"/></svg>CDUsb.y</span><span class="fd">2019-08-25 오전 9:06</span><span class="ft">Y 파일</span></div>
        <div class="hs hs-ex"><span class="hs-a">‹</span><div class="hs-thumb"></div><span class="hs-a">›</span></div>
      </div>
    </div>
    <footer class="ex-status"><span>7개 항목</span></footer>
  </section>

  <!-- Computer Management -->
  <section class="win cm">
    <header class="cm-title">
      <svg class="i16"><use href="#s-comp"/></svg><span class="t-gray">컴퓨터 관리</span>
      <div class="caps caps-cm"><i class="cap-min"></i><i class="cap-max"></i><i class="cap-x"></i></div>
    </header>
    <nav class="cm-menu"><span>파일(F)</span><span>동작(A)</span><span>보기(V)</span><span>도움말(H)</span></nav>
    <div class="cm-tools">
      <svg class="tb" viewBox="0 0 18 18"><path d="M1 9l8-6v3h8v6H9v3z" fill="#2a9ae8" stroke="#1468a8"/></svg>
      <svg class="tb" viewBox="0 0 18 18"><path d="M17 9L9 3v3H1v6h8v3z" fill="#8c8c8c" stroke="#666"/></svg>
      <i class="tb-sep"></i>
      <svg class="tb" viewBox="0 0 18 18"><path d="M1 5h6l1 1h8v10H1z" fill="#efcf6f" stroke="#b89a42"/><path d="M7 13c0-4 2-7 6-9l-2-2 6 0-1 5-2-1c-2 1-4 3-4 7z" fill="#3aa63a"/></svg>
      <span class="tb-hl"><svg class="tb" viewBox="0 0 18 18"><rect x="1" y="2" width="16" height="14" fill="#fff" stroke="#667"/><rect x="1" y="2" width="16" height="3" fill="#abc"/><path d="M7 5v11" stroke="#667"/><path d="M3 7h3M3 10h3M3 13h3" stroke="#4a8"/><path d="M13 8l-4 3 4 3z" fill="#3a9a4a"/></svg></span>
      <i class="tb-sep"></i>
      <svg class="tb" viewBox="0 0 18 18"><rect x="2" y="1" width="14" height="16" fill="#2e5fb8" stroke="#123a80"/><text x="9" y="14" text-anchor="middle" font-family="Liberation Sans" font-weight="700" font-size="13" fill="#fff">?</text></svg>
      <span class="tb-hl tb-hl2"><svg class="tb" viewBox="0 0 18 18"><rect x="1" y="2" width="16" height="14" fill="#fff" stroke="#667"/><rect x="1" y="2" width="16" height="3" fill="#abc"/><path d="M11 5v11" stroke="#667"/><path d="M13 8h3M13 11h3M13 14h3" stroke="#4a8"/><path d="M5 8l4 3-4 3z" fill="#3a9a4a"/></svg></span>
      <i class="tb-sep"></i>
      <svg class="tb" viewBox="0 0 18 18"><rect x="6" y="6" width="11" height="5" fill="#777"/><rect x="10" y="7" width="4" height="3" fill="#6ac"/><path d="M6 11l-5 5" stroke="#555" stroke-width="2"/></svg>
      <svg class="tb" viewBox="0 0 18 18"><path d="M3 3l12 12M15 3L3 15" stroke="#e01010" stroke-width="4"/></svg>
      <svg class="tb" viewBox="0 0 18 18"><path d="M4 1h8l3 3v13H4z" fill="#fff" stroke="#999"/><path d="M6 10l2 3 4-5" fill="none" stroke="#e8602a" stroke-width="1.5"/></svg>
      <svg class="tb" viewBox="0 0 18 18"><path d="M3 1h8l3 3v13H3z" fill="#fbe98c" stroke="#c8a83a"/><path d="M12 8l4 4h-2v4h-4v-4H8z" fill="#2e9a2e"/></svg>
      <svg class="tb" viewBox="0 0 18 18"><path d="M3 1h8l3 3v13H3z" fill="#fbe98c" stroke="#c8a83a"/><circle cx="12" cy="10" r="3.5" fill="#e8f4fc" stroke="#4a7aa8"/><path d="M10 13l-4 4" stroke="#6a8aa8" stroke-width="2"/></svg>
      <svg class="tb" viewBox="0 0 18 18"><rect x="1" y="3" width="16" height="12" fill="#fff" stroke="#778"/><path d="M3 6l1 1 1-2M3 10l1 1 1-2" stroke="#39c" fill="none"/><path d="M7 6h8M7 10h8" stroke="#aab"/></svg>
    </div>
    <div class="cm-main">
      <aside class="tree">
        <div class="tr l0"><svg class="i16"><use href="#s-comp"/></svg><span>컴퓨터 관리(로컬)</span></div>
        <div class="tr l1"><i class="cv-o"></i><svg class="i16"><use href="#s-tool"/></svg><span>시스템 도구</span></div>
        <div class="tr l2"><i class="cv-c"></i><svg class="i16"><use href="#s-clock"/></svg><span>작업 스케줄러</span></div>
        <div class="tr l2"><i class="cv-c"></i><svg class="i16"><use href="#s-ev"/></svg><span>이벤트 뷰어</span></div>
        <div class="tr l2"><i class="cv-c"></i><svg class="i16"><use href="#s-shr"/></svg><span>공유 폴더</span></div>
        <div class="tr l2"><i class="cv-c"></i><svg class="i16"><use href="#s-usr"/></svg><span>로컬 사용자 및 그룹</span></div>
        <div class="tr l2"><i class="cv-c"></i><svg class="i16"><use href="#s-perf"/></svg><span>성능</span></div>
        <div class="tr l2"><i class="cv-n"></i><svg class="i16"><use href="#s-dev"/></svg><span>장치 관리자</span></div>
        <div class="tr l1"><i class="cv-o"></i><svg class="i16"><use href="#s-stg"/></svg><span>저장소</span></div>
        <div class="tr l2"><i class="cv-n"></i><svg class="i16 tr-sel-i"><use href="#s-dmg"/></svg><span class="tr-sel">디스크 관리</span></div>
        <div class="tr l1"><i class="cv-c"></i><svg class="i16"><use href="#s-svc"/></svg><span>서비스 및 응용 프로그램</span></div>
      </aside>
      <div class="center">
        <div class="list">
          <div class="lv">
            <div class="lv-head lv-grid"><span>볼륨</span><span>레이아웃</span><span>형식</span><span>파일 시스템</span><span>상태</span><span>용량</span></div>
            <div class="lv-body">
              <div class="lv-grid lv-row"><span class="vn"><svg class="hd"><use href="#s-hd"/></svg>Seagate 80GB (E:)</span><span>단순</span><span>기본</span><span>NTFS</span><span>정상 (활성, 주 파티션)</span><span>74.53 GB</span></div>
              <div class="lv-grid lv-row"><span class="vn"><svg class="hd"><use href="#s-hd"/></svg>Seagate 500GB (D:)</span><span>단순</span><span>기본</span><span>NTFS</span><span>정상 (활성, 주 파티션)</span><span>465.76 GB</span></div>
              <div class="lv-grid lv-row"><span class="vn"><svg class="hd"><use href="#s-hd"/></svg>SSD OS (C:)</span><span>단순</span><span>기본</span><span>NTFS</span><span>정상 (부팅, 크래시 덤프, 주 파티션)</span><span>111.29 GB</span></div>
              <div class="lv-grid lv-row"><span class="vn"><svg class="hd"><use href="#s-hdv"/></svg><b class="vn-sel">Ventoy (Z:)</b></span><span>단순</span><span>기본</span><span>NTFS</span><span>정상 (활성, 주 파티션)</span><span>149.97 GB</span></div>
              <div class="lv-grid lv-row"><span class="vn"><svg class="hd"><use href="#s-hdv"/></svg>VTOYEFI</span><span>단순</span><span>기본</span><span>FAT</span><span>정상 (EFI 시스템 파티션)</span><span>32 MB</span></div>
              <div class="lv-grid lv-row"><span class="vn"><svg class="hd"><use href="#s-hd"/></svg>시스템 예약</span><span>단순</span><span>기본</span><span>NTFS</span><span>정상 (시스템, 활성, 주 파티션)</span><span>512 MB</span></div>
            </div>
            <div class="hs hs-cm"><span class="hs-a">‹</span><div class="hs-thumb"></div><span class="hs-a">›</span></div>
          </div>
          <div class="vs vs-cm"><span class="vs-a">⌃</span><div class="vs-thumb"></div><span class="vs-a vs-b">⌄</span></div>
        </div>
        <div class="split"></div>
        <div class="disks">
          <div class="disk">
            <div class="d-label"><div class="d-name"><svg class="hd"><use href="#s-hd"/></svg><b>디스크 0</b></div><div>기본</div><div>111.79 GB</div><div>온라인</div></div>
            <div class="frame">
              <div class="part w146"><div class="bar"></div><div class="pbox"><b>시스템 예약</b><span>512 MB NTFS</span><span>정상 (시스템, 활성, 주 파티션)</span></div></div>
              <div class="part w276"><div class="bar"></div><div class="pbox"><b>SSD OS&nbsp; (C:)</b><span>111.29 GB NTFS</span><span>정상 (부팅, 크래시 덤프, 주 파티션)</span></div></div>
            </div>
          </div>
          <div class="disk">
            <div class="d-label"><div class="d-name"><svg class="hd"><use href="#s-hd"/></svg><b>디스크 1</b></div><div>기본</div><div>74.53 GB</div><div>온라인</div></div>
            <div class="frame">
              <div class="part w408"><div class="bar"></div><div class="pbox"><b>Seagate 80GB&nbsp; (E:)</b><span>74.53 GB NTFS</span><span>정상 (활성, 주 파티션)</span></div></div>
            </div>
          </div>
          <div class="disk">
            <div class="d-label"><div class="d-name"><svg class="hd"><use href="#s-hd"/></svg><b>디스크 2</b></div><div>기본</div><div>465.76 GB</div><div>온라인</div></div>
            <div class="frame frame-grow">
              <div class="part w474"><div class="bar"></div><div class="pbox"><b>Seagate 500GB&nbsp; (D:)</b><span>465.76 GB NTFS</span><span>정상 (활성, 주 파티션)</span></div></div>
            </div>
          </div>
          <div class="disk">
            <div class="d-label"><div class="d-name"><svg class="hd"><use href="#s-hdv"/></svg><b>디스크 3</b></div><div>기본</div><div>150.00 GB</div><div>온라인</div></div>
            <div class="frame">
              <div class="part w334 part-sel"><div class="bar"></div><div class="pbox pbox-hatch"><b>Ventoy&nbsp; (Z:)</b><span>149.97 GB NTFS</span><span>정상 (활성, 주 파티션)</span></div><i class="redbox rb-part"></i></div>
              <div class="part p97"><div class="bar"></div><div class="pbox"><b>VTOYEFI</b><span>32 MB FAT</span><span>정상 (EFI 시스템 파티션)</span></div></div>
            </div>
          </div>
          <div class="legend"><i></i><span>할</span></div>
        </div>
      </div>
      <aside class="actions">
        <div class="ac-head">작업</div>
        <div class="ac-sel"><span>디스크 관리</span><i class="ac-up"></i></div>
        <div class="ac-item"><span>기타 작업</span><i class="ac-right"></i></div>
      </aside>
    </div>
    <footer class="cm-status"></footer>
  </section>

  <!-- VHDman -->
  <section class="win vhd">
    <header class="vh-title">
      <svg class="i16" viewBox="0 0 18 16"><path d="M1 8c3-5 10-6 16-5l-5 3 4 1-6 2 1 3-5-1-2 4c-2-2-3-4-3-7z" fill="#2a93d8"/><path d="M4 7l7-2-3 4z" fill="#cfe"/></svg>
      <span>VHDman2.07_x64</span>
      <div class="caps caps-vh"><i class="cap-min"></i><i class="cap-max dim"></i><i class="cap-x"></i></div>
    </header>
    <div class="vh-body">
      <div class="vrow top-red">
        <span class="lb w70 ml6">VHD파일</span><span class="cb w299 txt">D:₩vmware₩CHUM.vhd</span><span class="b w77 ml22">탐색</span>
      </div>
      <div class="vrow h30">
        <label class="op ml9 w80 mt3"><i class="rd on"></i>VHD</label><label class="op w80 mt3"><i class="rd"></i>VHDx</label><label class="op w184 mt3"><i class="rd"></i>WIM</label>
        <span class="b w77 mt10">VHD드라이브</span><span class="lb ml4 mt9 nw">시스템드라이브</span>
      </div>
      <div class="vrow h20">
        <span class="b w78 mt1">VHD(x)검색</span><span class="b w63 ml12 mt1">파일정보</span><span class="b w88 ml12 mt1">기본부팅변경</span><span class="b w77 ml12 mt1">BCDBOOT</span>
        <span class="cb w70 ml12 h19 txt">Z:</span><span class="cb w70 ml10 h19"></span>
      </div>
      <div class="vrow h14">
        <label class="op ml164 w100 mt1"><i class="ck"></i>현재 부팅 OS</label><label class="op w50 mt3"><i class="rd"></i>Bios</label><label class="op w50 mt3"><i class="rd"></i>Uefi</label><label class="op w50 mt3"><i class="rd on"></i>All</label><label class="op mt3 nw"><i class="ck"></i>기존BCD제거</label>
      </div>
      <div class="tabs"><span class="tab on">부모생성</span><span class="tab">자식생성</span><span class="tab">부팅항목</span></div>
      <div class="panel">
        <div class="vrow h26">
          <span class="lb w28 mt1">크기</span><span class="cb w49 h19 txt">GB</span><span class="lb w94 ml33 mt1">타입</span><span class="b w77 mt4">VHD생성</span><label class="op w86 ml9 mt6"><i class="ck"></i>이미지설치</label><span class="b w68 mt4">크기확장</span>
        </div>
        <div class="vrow h17">
          <span class="cb w79 mt2"></span><span class="cb w109 ml31 mt2 txt">동적디스크</span><label class="op w86 ml71 mt1"><i class="ck"></i>BCD등록</label><span class="b w68">BCD검색</span><label class="op ml2 mt3"><i class="ck"></i>UEFI</label>
        </div>
        <div class="vrow h30">
          <label class="op w75 ml290 mt4"><i class="ck"></i>GPT방식</label><span class="cb w125 h19"></span>
        </div>
        <div class="vrow h22">
          <span class="lb w70">복사대상</span><span class="cb w299"></span><span class="b w77 ml22 mt1">탐색</span>
        </div>
        <div class="vrow h78">
          <div class="note w391"><div><span class="w53 ib">복사</span>-VHD파일선택</div><div>변경체크-타입이나&nbsp; 크기를 변경시켜서 복사할 경우</div><div class="note-in">VHD파일_크기_타입</div></div>
          <div class="vcol"><span class="b w77 mt9">복사</span><label class="op mt4 nw ml-1"><i class="ck"></i>타입|크기변경</label><span class="b w77 mt8">서명변경</span></div>
        </div>
        <div class="dash"></div>
        <div class="vrow h22 pt20">
          <label class="op w70 mt2"><i class="rd on"></i>ImageX</label><label class="op w60 mt2"><i class="rd"></i>Dism</label><label class="op w45 mt2"><i class="rd"></i>Gho</label><label class="op w40 mt2"><i class="rd"></i>Tib</label><label class="op w70 mt2"><i class="rd"></i>HDClone</label><label class="op w106 mt2"><i class="rd"></i>SnapShot</label><span class="b w98">WIM_ESD검색</span>
        </div>
        <div class="vrow h17"><label class="op"><i class="ck"></i>wimboot</label></div>
        <div class="vrow h30"><span class="lb w70">이미지파일</span><span class="cb w299"></span><span class="b w77 ml22">탐색</span></div>
        <div class="vrow h26"><span class="lb w70">이미지번호</span><span class="cb w299"></span><span class="b w77 ml22">이미지정보</span><i class="ck ml4 mt4"></i></div>
        <div class="vrow h17"><i class="prog"></i><span class="lb ml19 w52">0</span><label class="op mt3 nw ml-1"><i class="ck"></i>무인설치</label></div>
        <div class="vrow h18"><span class="lb w141 nw">남은시간:</span><span class="b w38 h15b">취소</span><label class="op ml21 mt1"><i class="ck"></i>format</label></div>
        <div class="vrow h25"><span class="b w79">이미지설치</span><span class="b dis w78 ml22">파티션복사</span><span class="b dis w78 ml22">디스크복사</span></div>
        <div class="vrow h27"><span class="lb w55">실행파일</span><span class="cb w140 h19 txt">ImageX.exe</span><div class="note note2 ml5"><div>VHD-복사대상</div><div>시스템-복사원본</div></div></div>
      </div>
      <div class="vrow h23 mt13">
        <span class="b w78 tall">Vdisk목록</span><span class="b w78 ml22 tall btn-red">VHD연결</span><span class="b w78 ml22 tall">용량최적화</span><span class="b w78 ml22 tall">VHD분리</span><span class="b w98 ml22 tall">디스크관리</span>
      </div>
      <div class="vrow h22">
        <span class="lb w40 ml100">파티션</span><span class="cb w36 h18c mt3 txt">1</span><label class="op ml23 mt8 nw"><i class="ck"></i>제로필작업제외</label>
      </div>
      <div class="vrow h23">
        <span class="b w78 tall">MBR설치</span><span class="b w78 ml22 tall">PBR_활성화</span><span class="b w78 ml22 tall">BootIce</span><span class="b w78 ml22 tall">파티션2.33</span><span class="b w98 ml22 tall">나가기</span>
      </div>
    </div>
  </section>

  <!-- Shrink dialog -->
  <section class="dlg">
    <header class="dlg-title"><span>축소 Z:</span><i class="redbox rb-dlg"></i><i class="cap-x dark"></i></header>
    <div class="dlg-body">
      <div class="dlg-row"><span>축소 전 전체 크기(MB):</span><span class="fld">153567</span></div>
      <div class="dlg-row"><span>사용할 수 있는 축소 공간 크기(MB):</span><span class="fld">90758</span></div>
      <div class="dlg-row"><span>축소할 공간 입력(MB)(E):</span>
        <span class="spin"><span class="spin-t">51200<i class="caret"></i></span><span class="spin-b"><i class="up"></i><i class="dn"></i></span><i class="redbox rb-spin"></i></span></div>
      <div class="dlg-row"><span>축소 후 전체 크기(MB):</span><span class="fld">102367</span></div>
      <div class="dlg-info">
        <svg class="i16" viewBox="0 0 16 16"><circle cx="8" cy="8" r="8" fill="#1469c8"/><rect x="7" y="7" width="2.4" height="6" fill="#fff"/><rect x="7" y="3.4" width="2.4" height="2.2" fill="#fff"/></svg>
        <p>이동할 수 없는 파일이 있는 지점을 벗어나 볼륨을 축소할 수 없습니다. 작업을 완료한<br>후 응용 프로그램 로그의 "defrag" 이벤트를 통해 작업에 대한 자세한 내용을 확인하십시<br>오.</p>
      </div>
      <p class="dlg-help">자세한 내용은 디스크 관리 도움말에서 "기본 볼륨 축소"를 참조하십시오.</p>
      <div class="dlg-btns"><span class="dbtn pri">축소(S)</span><span class="dbtn">취소(C)</span></div>
    </div>
  </section>

  <!-- Launcher -->
  <aside class="launcher">
    <div class="la-top"><span>✕</span></div>
    <div class="la-panel">
      <svg class="i32"><use href="#l-1d"/></svg><svg class="i32"><use href="#l-7z"/></svg><svg class="i32"><use href="#l-tri"/></svg><svg class="i32"><use href="#l-a"/></svg>
      <svg class="i32"><use href="#l-64"/></svg><svg class="i32"><use href="#l-aimp"/></svg><svg class="i32"><use href="#l-sun"/></svg><svg class="i32"><use href="#l-any"/></svg>
      <svg class="i32"><use href="#l-iso"/></svg><svg class="i32"><use href="#l-sync"/></svg><svg class="i32"><use href="#l-pie"/></svg><svg class="i32"><use href="#l-flop"/></svg>
      <svg class="i32"><use href="#l-pal"/></svg><svg class="i32"><use href="#l-mag"/></svg><svg class="i32"><use href="#l-fan"/></svg><svg class="i32"><use href="#l-eye"/></svg>
      <svg class="i32"><use href="#l-glob"/></svg><svg class="i32"><use href="#l-lock"/></svg><svg class="i32"><use href="#l-talk"/></svg><svg class="i32"><use href="#l-win"/></svg>
      <svg class="i32"><use href="#l-nt"/></svg><svg class="i32"><use href="#l-pdf"/></svg><svg class="i32"><use href="#l-ring"/></svg><svg class="i32"><use href="#l-sarc"/></svg>
      <svg class="i32"><use href="#l-play"/></svg><svg class="i32"><use href="#l-grid"/></svg><svg class="i32"><use href="#l-cube"/></svg><svg class="i32"><use href="#l-driv"/></svg>
      <svg class="i32"><use href="#l-b"/></svg><svg class="i32"><use href="#l-s"/></svg><svg class="i32"><use href="#l-t"/></svg><svg class="i32"><use href="#l-p"/></svg>
      <svg class="i32"><use href="#l-br"/></svg><svg class="i32"><use href="#l-cd"/></svg><svg class="i32"><use href="#l-calc"/></svg><svg class="i32"><use href="#l-note"/></svg>
      <svg class="i32"><use href="#l-dolp"/></svg><svg class="i32"><use href="#l-bin"/></svg><svg class="i32"><use href="#l-ut"/></svg><svg class="i32"><use href="#l-gear"/></svg>
      <svg class="i32"><use href="#l-torch"/></svg><svg class="i32"><use href="#l-vid"/></svg><svg class="i32"><use href="#l-cub2"/></svg><svg class="i32"><use href="#l-book"/></svg>
      <svg class="i32"><use href="#l-atom"/></svg><svg class="i32"><use href="#l-ps"/></svg><svg class="i32"><use href="#l-gears"/></svg><svg class="i32"><use href="#l-wiz"/></svg>
      <svg class="i32"><use href="#l-cam"/></svg><svg class="i32"><use href="#l-mp3"/></svg><svg class="i32"><use href="#l-oi"/></svg><svg class="i32"><use href="#l-so"/></svg>
      <svg class="i32"><use href="#l-box"/></svg><svg class="i32"><use href="#l-bar"/></svg><svg class="i32"><use href="#l-shld"/></svg><svg class="i32"><use href="#l-four"/></svg>
    </div>
    <div class="la-foot"><i></i></div>
  </aside>

  <!-- FastStone -->
  <aside class="fsc">
    <div class="fsc-title">
      <svg class="i16" viewBox="0 0 16 14"><path d="M9 0L0 13h6l3-7z" fill="#e01010"/><path d="M9 6l3 7h4L11 5zM7 13l2-5 2 5z" fill="#20c020"/></svg>
      <span>FastStone Capture</span><i class="fsc-min"></i><b>✕</b>
    </div>
    <div class="fsc-tools">
      <svg class="i16" viewBox="0 0 16 16"><path d="M1 14V5h5l1 1h5v2H5l-3 6h10l3-6H6" fill="#fff" stroke="#222"/><path d="M9 5c0-2 2-3 4-3l-1-1 3 1-2 2" fill="none" stroke="#222"/></svg>
      <svg class="i16" viewBox="0 0 16 16"><rect x="1" y="2" width="14" height="12" fill="#fff" stroke="#000" stroke-width="1.4"/><path d="M1 4h14" stroke="#000" stroke-width="2"/></svg>
      <svg class="i16" viewBox="0 0 16 16"><rect x="1" y="2" width="14" height="12" fill="#dfe8f6" stroke="#000"/><path d="M1 4h14" stroke="#000" stroke-width="2"/><rect x="4" y="7" width="8" height="5" fill="#fff" stroke="#000"/></svg>
      <svg class="i16" viewBox="0 0 16 16"><rect x="2" y="3" width="12" height="10" fill="#fff" stroke="#000" stroke-dasharray="2 1"/></svg>
      <svg class="i16" viewBox="0 0 16 16"><path d="M5 1l3 4 6-3-2 6 3 3-6 1-1 4-3-4-4-1 3-4z" fill="#fff" stroke="#000"/></svg>
      <svg class="i16" viewBox="0 0 16 16"><rect x="1" y="1" width="14" height="14" fill="#fff" stroke="#000"/><path d="M3 3l3 3M13 3l-3 3M3 13l3-3M13 13l-3-3" stroke="#000"/></svg>
      <svg class="i16" viewBox="0 0 16 16"><rect x="1" y="1" width="14" height="14" fill="#fff" stroke="#000" stroke-dasharray="2 1"/><path d="M8 3v5M4 8h8l-4 4z" stroke="#000"/></svg>
      <svg class="i16" viewBox="0 0 16 16"><rect x="2" y="3" width="12" height="10" fill="#fff" stroke="#000" stroke-width="1.5"/><path d="M0 1h3v3H0zM13 1h3v3h-3zM0 12h3v3H0zM13 12h3v3h-3z"/></svg>
      <svg class="i16" viewBox="0 0 16 16"><rect x="2" y="1" width="12" height="14" fill="#fff" stroke="#000"/><path d="M5 1v14M11 1v14M2 8h3M11 8h3M2 4h3M11 4h3M2 12h3M11 12h3" stroke="#000" stroke-width="1.4"/></svg>
      <i class="fsc-sep"></i>
      <svg class="i16" viewBox="0 0 16 16"><circle cx="8" cy="9" r="6.4" fill="#fff" stroke="#000" stroke-width="1.3"/><path d="M8 9l3-3M6 1h4" stroke="#000" stroke-width="1.3"/></svg>
      <svg class="i16" viewBox="0 0 16 16"><rect x="1" y="1" width="14" height="14" fill="#7888b8"/><rect x="3" y="2" width="10" height="6" fill="#f05870"/><rect x="5" y="11" width="6" height="4" fill="#fff"/></svg>
      <i class="fsc-drop"></i>
      <i class="fsc-sep"></i>
      <svg class="i16" viewBox="0 0 16 16"><path d="M1 2h14l-7 13z" fill="#efe0d0" stroke="#b8702a"/><path d="M5 7l3 3 5-7" fill="none" stroke="#2a8ae0" stroke-width="1.5"/></svg>
    </div>
  </aside>

  <!-- Step badges -->
  <i class="stepmark s1">1</i><i class="stepmark s2">2</i><i class="stepmark s3">3</i><i class="stepmark s4">4</i><i class="stepmark s5">5</i>

  <footer class="taskbar">
    <div class="start"><svg class="i20" viewBox="0 0 20 20"><path d="M0 3l8-1v7H0zM9 2l11-2v9H9zM0 10h8v7l-8-1zM9 10h11v10L9 18z" fill="#fff"/></svg></div>
    <div class="tk act"><svg class="i24" viewBox="0 0 24 24"><path d="M1 3h9l2 3h11v16H1z" fill="#f6c53f"/><path d="M1 10h22v12H1z" fill="#fbdc6d"/><rect x="7" y="15" width="10" height="5" fill="#2a8ad8"/><rect x="10" y="17" width="4" height="3" fill="#fbdc6d"/></svg></div>
    <div class="tk"><svg class="i24"><use href="#d-edge"/></svg></div>
    <div class="tk"><svg class="i24" viewBox="0 0 24 24"><path d="M6 1h14l-3 20H3z" fill="#b8d4e4"/><path d="M6 1L3 21l5 2 4-20z" fill="#e8f4fa"/></svg></div>
    <div class="tk"><svg class="i24"><use href="#d-menu"/></svg></div>
    <div class="tk"><svg class="i24"><use href="#l-aimp"/></svg></div>
    <div class="tk"><svg class="i24"><use href="#l-ut"/></svg></div>
    <div class="tk"><svg class="i24"><use href="#l-play"/></svg></div>
    <div class="tk"><svg class="i24"><use href="#l-fan"/></svg></div>
    <div class="tk"><svg class="i24"><use href="#l-eye"/></svg></div>
    <div class="tk"><svg class="i24" viewBox="0 0 24 24"><circle cx="12" cy="12" r="12" fill="#1a80e8"/><circle cx="12" cy="12" r="6" fill="none" stroke="#fff" stroke-width="2.5"/></svg></div>
    <div class="tk act2"><svg class="i24"><use href="#s-comp"/></svg></div>
    <div class="tk act"><svg class="i24"><use href="#l-torch"/></svg></div>
    <div class="tray">
      <svg class="i16" viewBox="0 0 16 14"><path d="M9 0L0 13h6l3-7z" fill="#e01010"/><path d="M9 6l3 7h4L11 5zM7 13l2-5 2 5z" fill="#20c020"/></svg>
      <svg class="i16" viewBox="0 0 16 16"><circle cx="3" cy="10" r="2.4" fill="#e02020"/><circle cx="8" cy="6" r="2.4" fill="#e02020"/><circle cx="13" cy="9" r="2.2" fill="#e02020"/><circle cx="7" cy="12" r="2" fill="#e02020"/></svg>
      <svg class="i16" viewBox="0 0 16 16"><rect width="16" height="16" rx="3" fill="#9aa4a0"/><circle cx="9" cy="10" r="4" fill="#a0a828"/><path d="M3 5c3-3 7-3 9-1-2 2-6 3-9 1z" fill="#4a9a20"/></svg>
      <svg class="i16" viewBox="0 0 16 16"><rect x="5" y="3" width="10" height="8" fill="none" stroke="#fff"/><rect x="1" y="1" width="5" height="7" fill="#1f2e3c" stroke="#fff"/><path d="M3 8v6M1 14h10" stroke="#fff"/></svg>
      <svg class="i16" viewBox="0 0 16 16"><path d="M1 6h3l4-4v12l-4-4H1zM10 5c2 2 2 4 0 6M12 3c3 3 3 7 0 10" fill="none" stroke="#fff"/></svg>
      <span class="ime">A</span>
      <div class="clock"><div>오전 8:19:35</div><div>2021-05-14</div></div>
      <div class="notif"><svg class="i20" viewBox="0 0 20 20"><path d="M1 2h17v12H8l-4 4v-4H1z" fill="#fff"/><path d="M4 5h11M4 8h11M4 11h7" stroke="#1f2e3c"/></svg><b>1</b></div>
    </div>
  </footer>
</main>
</body>
</html>
```
FILE: styles.css
```css
*{box-sizing:border-box}
html,body{margin:0;padding:0;width:1920px;height:1080px;overflow:hidden}
body{font:12px/16px "Liberation Sans","Noto Sans CJK KR",sans-serif;letter-spacing:.35px;word-spacing:2px;color:#1a1a1a}
i{font-style:normal;display:block}
.sprite{position:absolute;width:0;height:0}
.i16{width:16px;height:16px;flex:none}
.i20{width:20px;height:20px;flex:none}
.i24{width:24px;height:24px;flex:none}
.i32{width:32px;height:32px;flex:none;justify-self:center;align-self:center}
.i48{width:48px;height:48px;flex:none}
.lat{letter-spacing:.2px;word-spacing:0}
.desktop{position:relative;width:1920px;height:1080px;background:linear-gradient(98deg,#00adfb 0,#00a8f6 40%,#0890e0 58%,#0a5cc2 72%,#0a45b4 82%,#0a3eb0 100%);overflow:hidden}

/* desktop icons */
.desk-icons{display:grid;grid-template-columns:76px 76px;grid-template-rows:repeat(10,100.8px);grid-auto-flow:column;padding-top:7px;width:152px}
.di{display:flex;flex-direction:column;align-items:center;color:#fff;text-align:center;word-spacing:0;text-shadow:0 1px 2px #000,1px 1px 1px #123}
.di span{display:block;margin-top:4px;line-height:15px;white-space:nowrap}

/* window base */
.win{position:absolute;background:#fff;box-shadow:0 2px 8px rgba(0,0,0,.35)}
.caps{display:flex;margin-left:auto}
.caps i{position:relative}
.cap-min{width:10px;height:1px;background:#999}
.cap-max{width:10px;height:10px;border:1px solid #999}
.cap-max.dim{border-color:#ddd}
.cap-x{width:12px;height:12px;background:linear-gradient(45deg,transparent 47%,#888 47%,#888 53%,transparent 53%),linear-gradient(-45deg,transparent 47%,#888 47%,#888 53%,transparent 53%)}
.cap-x.dark{background:linear-gradient(45deg,transparent 46%,#222 46%,#222 54%,transparent 54%),linear-gradient(-45deg,transparent 46%,#222 46%,#222 54%,transparent 54%);margin-left:auto}

/* computer management */
.cm{left:175px;top:14px;width:984px;height:681px;display:flex;flex-direction:column;border-right:1px solid #888}
.cm-title{display:flex;align-items:center;height:27px;padding-left:7px;gap:4px;flex:none}
.t-gray{color:#999;font-size:13px;margin-left:1px}
.caps-cm{align-items:center;gap:34px;padding-right:18px}
.cm-menu{display:flex;height:25px;align-items:center;padding-left:10px;gap:15.5px;border-bottom:1px solid #c2c2c2;flex:none}
.cm-tools{display:flex;height:23px;align-items:center;padding-left:1px;flex:none}
.tb{width:18px;height:18px;flex:none;margin:0 2.5px}
.tb-sep{width:1px;height:18px;background:#a0a0a0;margin:0 3.5px}
.tb-hl{display:flex;align-items:center;justify-content:center;width:23px;height:22px;background:#cfe6f8;border:1px solid #90c4ee;margin:0}
.tb-hl2{margin-left:0}
.cm-main{flex:1;display:flex;background:#f0f0f0;padding:8px 1px 0 1px;min-height:0}
.cm-status{height:23px;background:#f0f0f0;flex:none}
.tree{width:189px;height:575px;background:#fff;border:1px solid #9a9a9a;border-top-width:2px;flex:none;white-space:nowrap}
.tr{display:flex;align-items:center;height:18px}
.l0{padding-left:4px}.l0 span{margin-left:5px}
.l1{padding-left:7px}.l1 i{width:18px}.l1 span{margin-left:3px}
.l2{padding-left:27px}.l2 i{width:15px}.l2 span{margin-left:5px}
.cv-o,.cv-c,.cv-n{height:10px;position:relative;flex:none}
.cv-o::before{content:"";position:absolute;left:1px;top:0;width:6px;height:6px;border-right:1.5px solid #333;border-bottom:1.5px solid #333;transform:rotate(45deg)}
.cv-c::before{content:"";position:absolute;left:0;top:2px;width:6px;height:6px;border-right:1.5px solid #999;border-top:1.5px solid #999;transform:rotate(45deg)}
.tr-sel{background:#d9d9d9;line-height:18px;padding:0 4px 0 5px;margin-left:0!important}
.tr-sel-i{background:#d9d9d9;height:18px;box-shadow:-2px 0 #d9d9d9}

.center{width:597px;margin-left:3px;flex:none;display:flex;flex-direction:column;height:575px;border-top:2px solid #9a9a9a;border-left:2px solid #9a9a9a;border-right:1px solid #c8c8c8;background:#fff}
.list{display:flex;height:134px;flex:none;background:#f0f0f0;position:relative}
.lv{width:578px;flex:none}
.lv-grid{display:grid;grid-template-columns:130px 64px 40px 80px 201px 62px;white-space:nowrap;overflow:hidden}
.lv-head{height:19px;background:#f0f0f0;border-bottom:1px solid #888;line-height:18px}
.lv-head span{border-right:2px solid #a8a8a8;overflow:hidden;padding-left:7px}
.lv-body{height:92px;overflow:hidden;background:#fff}
.lv-row{height:17px;line-height:17px;color:#2a2a2a;word-spacing:1.5px}
.lv-row span{padding-left:7px;overflow:hidden}
.lv-row span:nth-child(2){padding-left:6px}
.lv-row span:nth-child(6){padding-left:7px;word-spacing:0}
.lv-row .vn{padding-left:3px;display:flex;align-items:center;word-spacing:0;letter-spacing:0}
.hd{width:14px;height:8px;flex:none;margin-right:3px}
.vn-sel{background:#f0f0f0;font-weight:400;padding:0 4px 0 0}
.vs{display:flex;flex-direction:column;align-items:center;background:#f0f0f0;flex:none;color:#444;position:relative}
.vs-a{height:17px;line-height:17px;font-size:15px;font-weight:700}
.vs-b{line-height:10px;margin-top:auto}
.vs-thumb{background:#cdcdcd;width:100%}
.vs-cm{width:16px;height:94px}
.vs-cm .vs-thumb{height:64px}
.hs{display:flex;align-items:center;background:#f0f0f0;color:#333;font-size:16px;font-weight:700;line-height:15px;flex:none}
.hs-a{width:18px;text-align:center;flex:none}
.hs-a:last-child{margin-left:auto}
.hs-thumb{background:#c9c9c9;height:100%}
.hs-cm{height:15px}
.hs-cm .hs-thumb{width:378px}
.split{height:3px;background:#8a8a8a;flex:none;margin-top:1px;margin-bottom:1px}
.disks{flex:1;background:#fff;display:flex;flex-direction:column;padding-top:1px;min-height:0;position:relative}
.disk{display:flex;height:99px;flex:none;border-bottom:1px solid #a8a8a8}
.d-label{width:114px;flex:none;background:#f0f0f0;padding:9px 0 0 12px;line-height:15px;height:98px}
.d-name{display:flex;align-items:center;height:16px}
.d-name .hd{margin:0 8px 0 2px}
.d-name b{font-weight:700}
.frame{display:flex;background:#f0f0f0;height:98px;padding:6px 2px 3px 2px;border-right:2px solid #b4b4b4;border-bottom:2px solid #b4b4b4;gap:2px}
.frame-grow{width:478px;border-right:0}
.part{display:flex;flex-direction:column;position:relative;flex:none}
.w146{width:145px}.w276{width:274px}.w408{width:408px}.w474{width:474px}.w334{width:333px}.p97{width:97px}
.bar{height:13px;background:#000080;flex:none}
.pbox{flex:1;margin:3px 1px 2px 3px;background:#fff;border-left:1px solid #a8a8a8;border-top:2px solid #a8a8a8;padding:2px 0 0 3px;line-height:15px;display:flex;flex-direction:column;white-space:nowrap;overflow:hidden;min-height:0}
.part-sel{background:#b0b0b0}
.pbox-hatch{margin:3px;border:0;background:repeating-linear-gradient(135deg,#fff 0,#fff 4px,#b4b4b4 4px,#b4b4b4 5px);padding-top:4px}
.legend{display:flex;align-items:center;gap:5px;height:36px;padding:14px 0 0 7px;background:#f0f0f0;flex:none}
.legend i{width:10px;height:12px;background:#000}
.redbox{position:absolute;border:3px solid #f00;pointer-events:none;z-index:7;background:transparent}
.rb-part{left:-6px;right:-5px;top:-6px;bottom:-11px}
.actions{width:187px;margin-left:6px;height:575px;background:#fff;border-top:2px solid #9a9a9a;border-left:2px solid #9a9a9a;flex:none}
.ac-head{height:21px;background:#f0f0f0;font-weight:700;line-height:20px;padding-left:5px;border-bottom:1px solid #d0d0d0}
.ac-sel{height:26px;background:linear-gradient(#bad2ec,#93b0d4);display:flex;align-items:center;padding:0 8px;justify-content:space-between}
.ac-up{width:0;height:0;border-left:5px solid transparent;border-right:5px solid transparent;border-bottom:5px solid #000}
.ac-item{display:flex;align-items:center;justify-content:space-between;height:22px;padding:0 9px 0 32px}
.ac-right{width:0;height:0;border-top:5px solid transparent;border-bottom:5px solid transparent;border-left:5px solid #000}

/* explorer */
.ex{left:1040px;top:641px;width:694px;height:342px;display:flex;flex-direction:column;border-top:1px solid #1a78c2}
.ex-title{display:flex;height:29px;align-items:center;padding-left:205px;flex:none}
.ex-green{width:105px;height:27px;margin-top:2px;background:#c2f09e;text-align:center;line-height:27px}
.ex-name{margin-left:13px;color:#999}
.caps-ex{align-items:center;gap:34px;padding-right:17px}
.ex-ribbon{display:flex;height:25px;align-items:center;border-bottom:1px solid #d0d0d0;position:relative;padding-left:110px;flex:none}
.rb-share{width:55px}
.rb-view{width:40px}
.rb-tool{width:105px;height:24px;text-align:center;line-height:22px;border:1px solid #ddd;border-top:0;border-bottom:0}
.rb-chev{width:10px;height:6px;color:#999;margin-left:auto}
.rb-help{width:16px;height:16px;border-radius:50%;background:#0f6fc6;color:#fff;font-weight:700;text-align:center;line-height:16px;margin:0 3px 0 12px}
.ex-addr{display:flex;height:42px;align-items:center;padding:0 12px 3px 0;flex:none;position:relative}
.ar{font-size:18px;color:#ccc;width:16px;text-align:center;line-height:20px}
.ar-back{margin-left:11px}.ar-fwd{margin-left:14px}
.ar-dd{width:10px;height:6px;color:#ddd;margin-left:10px}
.ar-up{color:#555;margin-left:6px;font-weight:700}
.addr-box{display:flex;align-items:center;width:415px;height:29px;margin-left:5px;border:1px solid #d9d9d9;padding-left:2px}
.crumb-gt{color:#777;margin:0 9px;font-size:14px}
.addr-chev{width:10px;height:7px;color:#444;margin-left:auto;margin-right:10px}
.addr-ref{width:33px;height:27px;border-left:1px solid #d9d9d9;text-align:center;color:#666;line-height:26px;font-size:17px;font-weight:700}
.search{display:flex;align-items:center;width:148px;height:29px;margin-left:13px;border:1px solid #d9d9d9;padding-left:12px;color:#777;gap:4px;white-space:nowrap;overflow:hidden}
.ex-body{flex:1;display:flex;min-height:0}
.ex-nav{width:150px;height:222px;overflow:hidden;padding-top:16px;flex:none}
.nv{display:flex;align-items:center;height:24px;padding-left:24px;gap:3px;white-space:nowrap}
.nv-i{padding-left:32px;gap:6px}
.nv-t{width:79px}
.nv-gap{margin-top:8px}
.pin{width:12px;height:12px}
.vs-ex{width:16px;height:222px}
.vs-ex .vs-thumb{height:114px}
.ex-files{margin-left:4px;flex:1;position:relative;min-width:0;display:flex;flex-direction:column;height:222px}
.f-head{display:grid;grid-template-columns:271px 144px 1fr;height:31px;align-items:center;position:relative;color:#555}
.fh1{padding-left:18px}
.fh2{padding-left:7px;border-left:1px solid #e5e5e5;height:24px;line-height:24px}
.fh3{padding-left:7px;border-left:1px solid #e5e5e5;height:24px;line-height:24px}
.sort{position:absolute;left:138px;top:0;width:7px;height:7px;border-left:1px solid #888;border-top:1px solid #888;transform:rotate(45deg)}
.f-row{display:grid;grid-template-columns:278px 144px 1fr;height:21px;align-items:center;white-space:nowrap;color:#707070}
.fn{display:flex;align-items:center;gap:2px;padding-left:19px;color:#222}
.fd{letter-spacing:-.3px;word-spacing:1px}
.hs-ex{height:16px;margin-top:auto;width:524px}
.hs-ex .hs-thumb{width:410px}
.ex-status{height:23px;padding-left:14px;line-height:22px;flex:none;color:#444;position:relative}
.ex-status span{display:inline-block;padding-right:8px;border-right:1px solid #eee}
.ex-status::after{content:"";position:absolute;left:646px;top:0;width:22px;height:1px;background:#29a9e0}

/* VHDman */
.vhd{left:1166px;top:15px;width:531px;height:615px;background:#f0f0f0;display:flex;flex-direction:column;font-size:12px;line-height:16px;letter-spacing:.3px;word-spacing:1px;color:#222;box-shadow:0 0 0 1px rgba(0,30,90,.25)}
.vh-title{display:flex;align-items:center;height:25px;background:#fff;padding-left:4px;gap:4px;color:#999;flex:none}
.caps-vh{align-items:center;gap:36px;padding-right:18px}
.vh-body{flex:1;padding:8px 0 0 11px;min-height:0;letter-spacing:.65px}
.vrow{display:flex;align-items:flex-start;flex:none;white-space:nowrap}
.top-red{width:489px;height:31px;border:3px solid #f00;align-items:center;padding-top:3px}
.txt{letter-spacing:.4px}
.h14{height:14px}.h17{height:17px}.h18{height:18px}.h20{height:20px}.h22{height:22px}.h23{height:23px}.h25{height:25px}.h26{height:26px}.h27{height:27px}.h30{height:30px}.h78{height:78px}
.w28{width:28px}.w36{width:36px}.w38{width:38px}.w40{width:40px}.w45{width:45px}.w49{width:49px}.w50{width:50px}.w52{width:52px}.w53{width:53px}.w55{width:55px}.w60{width:60px}.w63{width:63px}.w68{width:68px}.w70{width:70px}.w75{width:75px}.w77{width:77px}.w78{width:78px}.w79{width:79px}.w80{width:80px}.w86{width:86px}.w88{width:88px}.w94{width:94px}.w98{width:98px}.w100{width:100px}.w106{width:106px}.w109{width:109px}.w125{width:125px}.w140{width:140px}.w141{width:141px}.w184{width:184px}.w299{width:299px}.w391{width:391px}
.ml-1{margin-left:-1px}.ml2{margin-left:2px}.ml4{margin-left:4px}.ml5{margin-left:5px}.ml6{margin-left:6px}.ml9{margin-left:9px}.ml10{margin-left:10px}.ml12{margin-left:12px}.ml19{margin-left:19px}.ml21{margin-left:21px}.ml22{margin-left:22px}.ml23{margin-left:23px}.ml31{margin-left:31px}.ml33{margin-left:33px}.ml71{margin-left:71px}.ml100{margin-left:100px}.ml164{margin-left:164px}.ml290{margin-left:290px}
.mt1{margin-top:1px}.mt2{margin-top:2px}.mt3{margin-top:3px}.mt4{margin-top:4px}.mt6{margin-top:6px}.mt8{margin-top:8px}.mt9{margin-top:9px}.mt10{margin-top:10px}.mt13{margin-top:13px}
.nw{white-space:nowrap}.ib{display:inline-block}
.lb{flex:none}
.b{display:flex;align-items:center;justify-content:center;height:18px;background:#e1e1e1;border:1px solid #b4b4b4;border-bottom-color:#a8a8a8;flex:none;position:relative}
.tall{height:23px}
.h15b{height:15px;background:#ececec}
.dis{background:#d2d2d2;color:#9c9c9c}
.cb{display:flex;align-items:center;height:20px;background:#fff;border:1px solid #7a7a7a;position:relative;flex:none;padding-left:2px;overflow:hidden}
.h19{height:19px}.h18c{height:18px}
.cb::after{content:"";position:absolute;right:7px;top:50%;width:6px;height:6px;margin-top:-5px;border-right:1px solid #444;border-bottom:1px solid #444;transform:rotate(45deg)}
.op{display:inline-flex;align-items:center;gap:4px;height:12px;flex:none;line-height:12px}
.rd,.ck{width:12px;height:12px;background:#fff;border:1px solid #333;flex:none;position:relative}
.rd{border-radius:50%}
.rd.on::after{content:"";position:absolute;left:2px;top:2px;width:6px;height:6px;border-radius:50%;background:#333}
.tabs{display:flex;align-items:flex-end;height:20px;margin-left:-1px;position:relative;z-index:1}
.tab{width:58px;height:18px;background:#f0f0f0;border:1px solid #d9d9d9;border-bottom:0;text-align:center;line-height:18px}
.tab.on{width:63px;height:21px;background:#fff;margin-bottom:-1px;line-height:19px}
.panel{width:507px;height:380px;margin-left:-1px;background:#fff;border:1px solid #d9d9d9;padding:3px 0 0 9px}
.note{color:#a6a6a6;line-height:12px;letter-spacing:.4px}
.note-in{padding-left:60px}
.note2{margin-top:-1px}
.vcol{display:flex;flex-direction:column;align-items:flex-start}
.dash{width:469px;height:1px;border-top:1px dashed #333}
.pt20{height:42px;padding-top:20px}
.prog{width:319px;height:15px;background:#e6e6e6;border:1px solid #bcbcbc;flex:none}
.btn-red::after{content:"";position:absolute;left:-7px;right:-7px;top:-5px;bottom:-5px;border:3px solid #f00;z-index:3}

/* dialog */
.dlg{position:absolute;left:400px;top:639px;width:526px;height:350px;background:#f0f0f0;box-shadow:0 0 0 1px #777,0 4px 14px rgba(0,0,0,.4);display:flex;flex-direction:column;z-index:5;letter-spacing:.4px;word-spacing:2.5px}
.dlg-title{height:31px;background:#fff;display:flex;align-items:center;padding:0 9px;position:relative;flex:none}
.rb-dlg{left:-1px;top:-2px;width:65px;height:36px}
.dlg-body{padding:13px 13px 0;flex:1}
.dlg-row{display:flex;justify-content:space-between;align-items:center;height:25px;margin-bottom:9px}
.fld{width:157px;height:25px;border:1px solid #fff;border-top-color:#a0a0a0;border-left-color:#a0a0a0;line-height:15px;padding-left:1px}
.spin{width:157px;height:23px;background:#fff;border-bottom:1px solid #0078d7;display:flex;position:relative;border-left:1px solid #888;border-top:1px solid #888}
.spin-t{flex:1;padding-left:4px;line-height:20px;display:flex;align-items:center}
.caret{width:1px;height:15px;background:#000}
.spin-b{width:17px;display:flex;flex-direction:column;background:#f0f0f0;gap:1px}
.spin-b i{flex:1;background:#f4f4f4;border:1px solid #bbb;position:relative}
.spin-b i::after{content:"";position:absolute;left:4px;top:3px;width:0;height:0;border-left:3px solid transparent;border-right:3px solid transparent}
.spin-b .up::after{border-bottom:3px solid #000}
.spin-b .dn::after{border-top:3px solid #000}
.rb-spin{left:-4px;right:-4px;top:-4px;bottom:-4px}
.dlg-info{display:flex;gap:14px;margin-top:-2px;line-height:15px;letter-spacing:.35px;word-spacing:2px}
.dlg-info p{margin:0;white-space:nowrap}
.dlg-help{margin:36px 0 0 30px;line-height:15px;white-space:nowrap}
.dlg-btns{display:flex;justify-content:flex-end;gap:9px;margin-top:37px}
.dbtn{display:flex;align-items:center;justify-content:center;width:86px;height:24px;background:#e1e1e1;border:1px solid #adadad}
.dbtn.pri{width:103px;border:2px solid #0078d7}

/* launcher */
.launcher{position:absolute;left:1707px;top:0;width:194px;height:608px;background:linear-gradient(90deg,#6d7380 0,#474c59 45%,#202532 48%,#181c28 100%);border-radius:0 0 6px 6px;display:flex;flex-direction:column;box-shadow:0 0 3px rgba(0,0,0,.5)}
.la-top{height:15px;color:#ddd;font-size:11px;line-height:15px;padding-left:9px;font-weight:700;flex:none}
.la-panel{margin:0 8px;height:569px;background:linear-gradient(90deg,#dfe2ea,#cbcfda);border-radius:4px;display:grid;grid-template-columns:repeat(4,40px);grid-auto-rows:40px;padding:5px 0 0 8px;flex:none}
.la-foot{flex:1;display:flex;align-items:center;justify-content:center;padding-left:2px}
.la-foot i{width:0;height:0;border-left:4px solid transparent;border-right:4px solid transparent;border-top:4px solid #ddd}

/* faststone */
.fsc{position:absolute;left:1610px;top:961px;width:302px;height:51px;border:1px solid #8a8f98;box-shadow:0 1px 4px rgba(0,0,0,.5);z-index:6;display:flex;flex-direction:column;letter-spacing:.2px;word-spacing:0}
.fsc-title{height:23px;background:linear-gradient(#f6f6f6,#d6d6d6);display:flex;align-items:center;padding:0 0 2px 3px;flex:none;font-family:"Noto Sans",sans-serif}
.fsc-title span{margin-left:3px;color:#111}
.fsc-title b{margin-left:10px;margin-right:5px;font-size:12px}
.fsc-min{width:8px;height:2px;background:#000;margin-left:auto;margin-top:5px}
.fsc-tools{flex:1;background:linear-gradient(#eef3fb,#a3c2f0);display:flex;align-items:center;padding-left:5px;gap:7px;border-top:1px solid #c8c8c8}
.fsc-sep{width:1px;height:17px;background:#8a98b0}
.fsc-drop{width:0;height:0;border-left:3px solid transparent;border-right:3px solid transparent;border-top:3px solid #000;margin-left:-4px}

/* numbered steps */
.stepmark{position:absolute;width:24px;height:24px;border-radius:50%;background:radial-gradient(circle,#1020ff 55%,#0000d0);border:2px solid #fff;box-shadow:1px 2px 4px rgba(0,0,0,.6);color:#fff;font:700 13px/20px "Liberation Serif",serif;text-align:center;z-index:8}
.s1{left:1432px;top:20px}.s2{left:1304px;top:526px}.s3{left:275px;top:17px}.s4{left:375px;top:671px}.s5{left:735px;top:777px}

/* taskbar */
.taskbar{position:absolute;left:0;bottom:0;width:1920px;height:40px;background:#1f2e3c;display:flex;align-items:center;color:#fff}
.start{width:50px;height:40px;display:flex;align-items:center;justify-content:center;padding-right:3px}
.tk{width:49px;height:40px;display:flex;align-items:center;justify-content:center;position:relative}
.tk svg{position:relative}
.tk.act::before,.tk.act2::before{content:"";position:absolute;left:1px;right:2px;top:2px;bottom:0;background:#465460;border:1px solid #5c6873}
.tk.act2::before{background:#606c78;border-color:#79848e}
.tray{margin-left:auto;display:flex;align-items:center;gap:8px;height:40px;padding-right:27px}
.ime{font-size:20px;line-height:20px;margin-left:-2px}
.clock{width:80px;text-align:center;line-height:18px;font-size:12px;margin:0 9px 0 2px;white-space:nowrap;word-spacing:1px}
.notif{position:relative;width:20px;height:22px}
.notif b{position:absolute;left:8px;top:9px;width:17px;height:17px;border-radius:50%;background:#444;border:1px solid #999;text-align:center;line-height:15px;font-size:13px}
```
